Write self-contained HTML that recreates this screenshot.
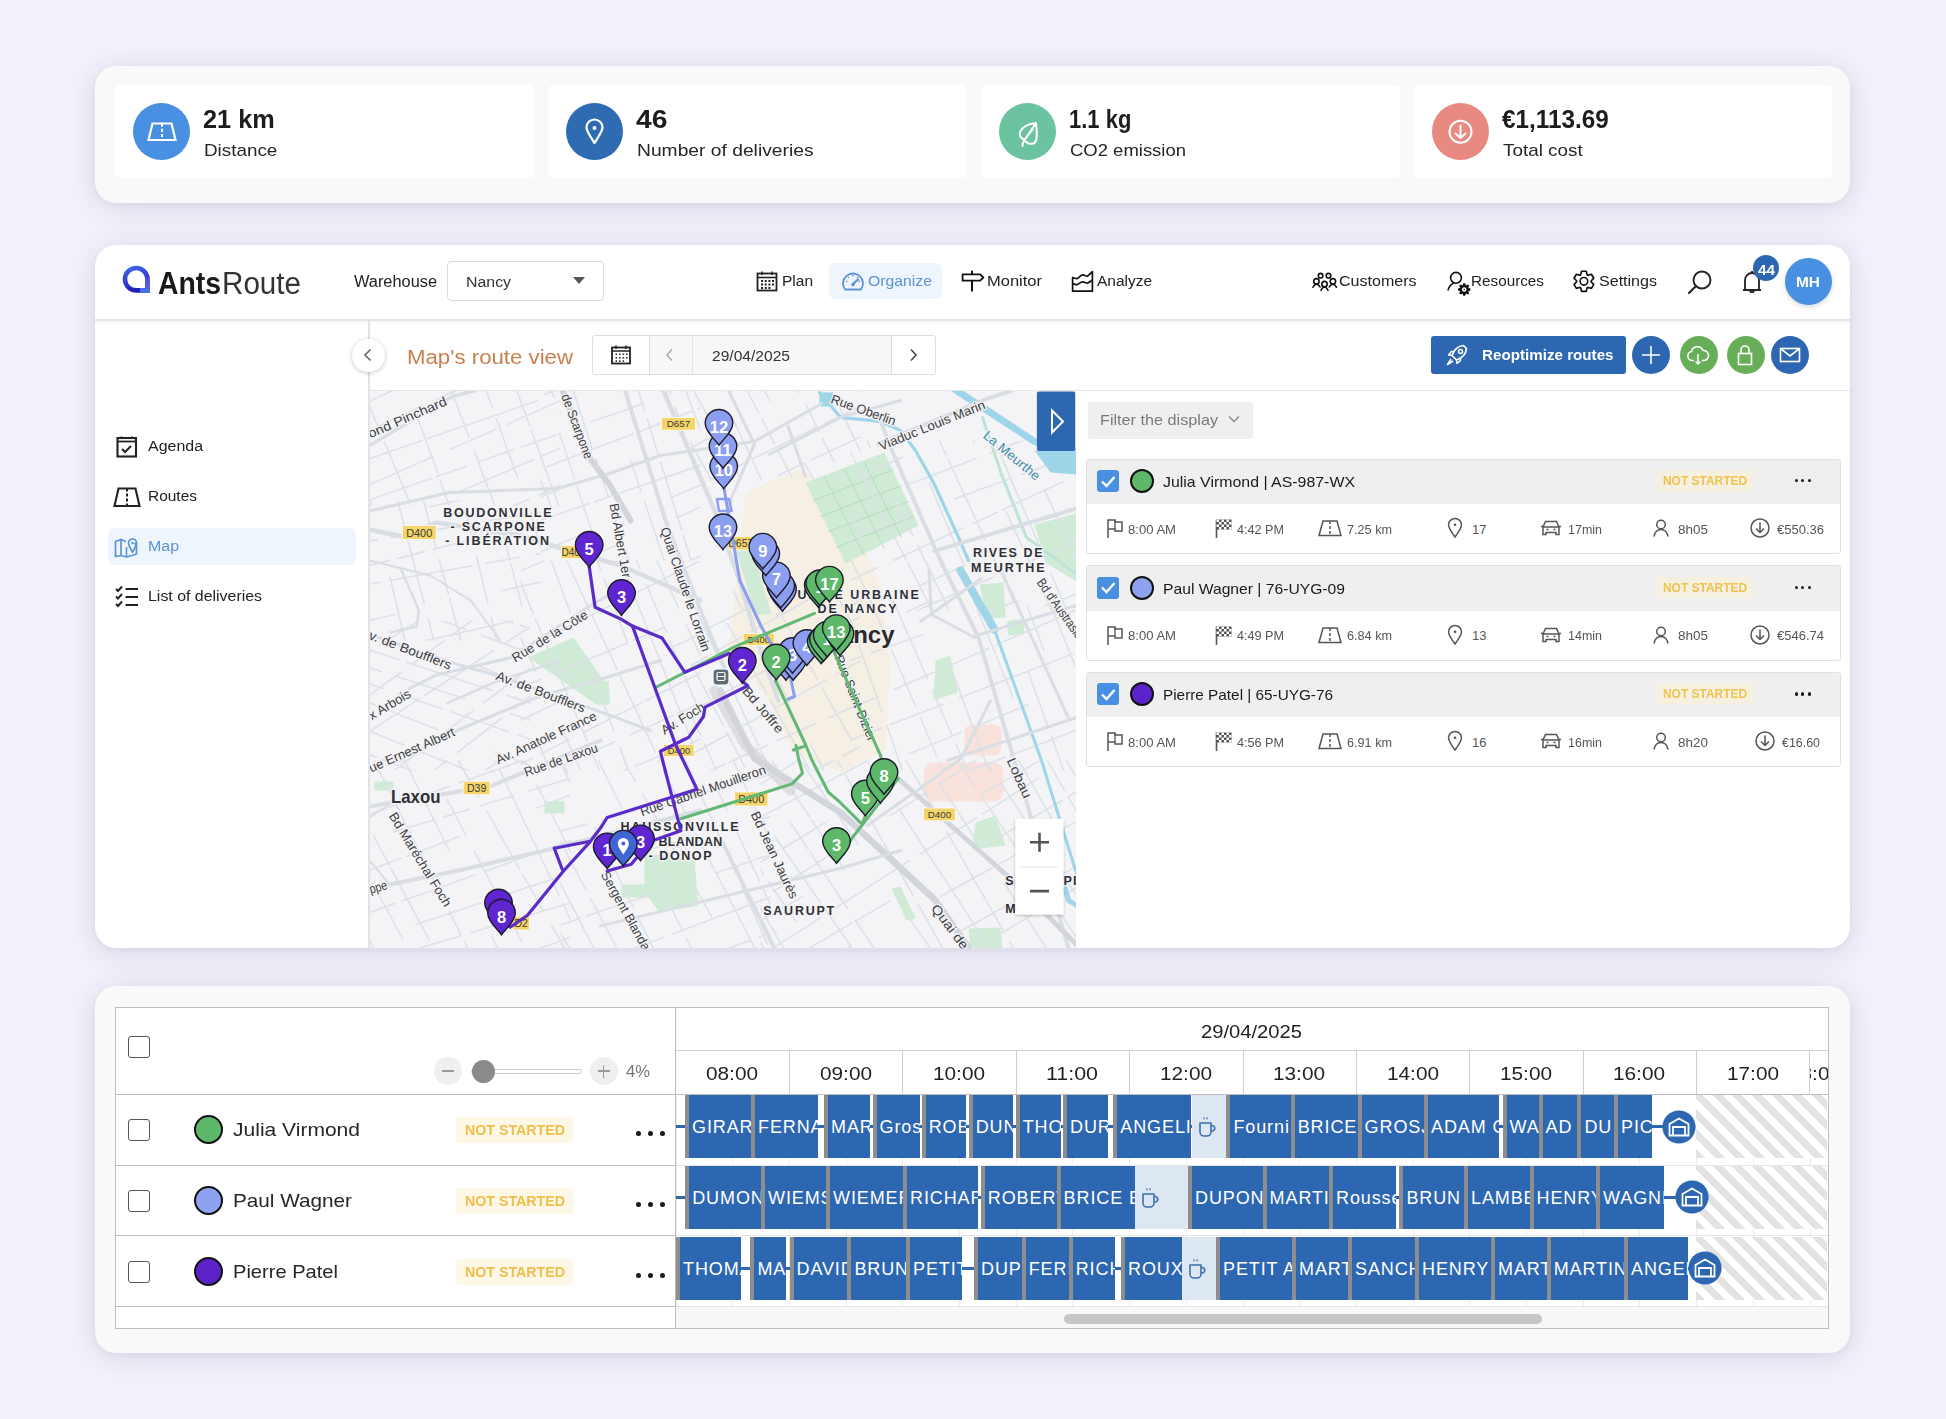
<!DOCTYPE html><html><head><meta charset="utf-8"><style>
html,body{margin:0;padding:0;}
body{width:1946px;height:1419px;overflow:hidden;background:#F3F1FA;position:relative;font-family:"Liberation Sans", sans-serif;}
.a{position:absolute;}
svg.a{overflow:visible;}
.t{position:absolute;white-space:nowrap;}
.blk{position:absolute;background:#2E67B1;box-sizing:border-box;border-left:4px solid #8E8E8E;overflow:hidden;}
.blk span{position:absolute;white-space:nowrap;color:#fff;font-size:18px;line-height:18px;letter-spacing:0.9px;}
</style></head><body>
<div class="a" style="left:95px;top:66px;width:1755px;height:137px;background:#F9F9FA;border-radius:21px;box-shadow:0 2px 6px rgba(40,30,80,0.05),0 4px 32px rgba(50,40,110,0.13);"></div>
<div class="a" style="left:115px;top:85px;width:419px;height:93px;background:#fff;border-radius:5px;"></div>
<div class="a" style="left:133px;top:103px;width:57px;height:57px;background:#4A90E2;border-radius:50%;"></div>
<div class="a" style="left:548px;top:85px;width:418px;height:93px;background:#fff;border-radius:5px;"></div>
<div class="a" style="left:566px;top:103px;width:57px;height:57px;background:#2F6BB3;border-radius:50%;"></div>
<div class="a" style="left:981px;top:85px;width:419px;height:93px;background:#fff;border-radius:5px;"></div>
<div class="a" style="left:999px;top:103px;width:57px;height:57px;background:#6CC3A0;border-radius:50%;"></div>
<div class="a" style="left:1414px;top:85px;width:418px;height:93px;background:#fff;border-radius:5px;"></div>
<div class="a" style="left:1432px;top:103px;width:57px;height:57px;background:#E88A82;border-radius:50%;"></div>
<svg class="a" style="left:133px;top:103px;" width="57" height="57" viewBox="0 0 57 57"><path d="M15.5 37 L19.5 20.5 L38.5 20.5 L42.5 37 Z" fill="none" stroke="#fff" stroke-width="2.2" stroke-linejoin="miter"/><path d="M29 20.5 V37" stroke="#fff" stroke-width="2" stroke-dasharray="3.2 2"/></svg>
<svg class="a" style="left:566px;top:103px;" width="57" height="57" viewBox="0 0 57 57"><path d="M28.5 40 C24 33 20.5 28 20.5 24.5 A8 8 0 0 1 36.5 24.5 C36.5 28 33 33 28.5 40 Z" fill="none" stroke="#fff" stroke-width="2.2" stroke-linejoin="round"/><circle cx="28.5" cy="25" r="2" fill="#fff"/></svg>
<svg class="a" style="left:999px;top:103px;" width="57" height="57" viewBox="0 0 57 57"><path d="M37 20 C29 21 23 24 21 29 C20 33 22 35.5 25.5 37 C28 34 31 29 33.5 26.5 M25.5 37 C24 39 23.5 41 23.5 43 M25.5 37 C27 40 31 41.5 34.5 40.5 C38 39 38.5 33 37 20 Z" fill="none" stroke="#fff" stroke-width="2" stroke-linecap="round" stroke-linejoin="round"/></svg>
<svg class="a" style="left:1432px;top:103px;" width="57" height="57" viewBox="0 0 57 57"><circle cx="28.5" cy="28.7" r="11" fill="none" stroke="#fff" stroke-width="2"/><path d="M28.5 22.5 V35 M23.5 30.5 L28.5 35 L33.5 30.5" fill="none" stroke="#fff" stroke-width="2" stroke-linecap="round" stroke-linejoin="round"/></svg>
<div class="t " style="left:203.0px;top:106.8px;font-size:25px;line-height:25px;color:#1d1d1d;font-weight:bold;transform:scaleX(1.0115);transform-origin:0 0;">21 km</div>
<div class="t " style="left:204.0px;top:141.6px;font-size:17px;line-height:17px;color:#262626;transform:scaleX(1.1083);transform-origin:0 0;">Distance</div>
<div class="t " style="left:636.0px;top:106.8px;font-size:25px;line-height:25px;color:#1d1d1d;font-weight:bold;transform:scaleX(1.1293);transform-origin:0 0;">46</div>
<div class="t " style="left:637.0px;top:141.6px;font-size:17px;line-height:17px;color:#262626;transform:scaleX(1.1322);transform-origin:0 0;">Number of deliveries</div>
<div class="t " style="left:1069.0px;top:106.8px;font-size:25px;line-height:25px;color:#1d1d1d;font-weight:bold;transform:scaleX(0.8791);transform-origin:0 0;">1.1 kg</div>
<div class="t " style="left:1070.0px;top:141.6px;font-size:17px;line-height:17px;color:#262626;transform:scaleX(1.0866);transform-origin:0 0;">CO2 emission</div>
<div class="t " style="left:1502.0px;top:106.8px;font-size:25px;line-height:25px;color:#1d1d1d;font-weight:bold;transform:scaleX(0.9715);transform-origin:0 0;">€1,113.69</div>
<div class="t " style="left:1503.0px;top:141.6px;font-size:17px;line-height:17px;color:#262626;transform:scaleX(1.1099);transform-origin:0 0;">Total cost</div>
<div class="a" style="left:95px;top:245px;width:1755px;height:703px;background:#fff;border-radius:21px;box-shadow:0 2px 6px rgba(40,30,80,0.05),0 4px 32px rgba(50,40,110,0.13);overflow:hidden;"></div>
<div class="a" style="left:95px;top:319px;width:1755px;height:2px;background:#E4E4E4;box-shadow:0 1px 3px rgba(0,0,0,0.08);"></div>
<svg class="a" style="left:120px;top:264px;" width="32" height="32" viewBox="0 0 32 32"><defs><linearGradient id="lg" x1="0" y1="0" x2="0.3" y2="1"><stop offset="0" stop-color="#3C66E4"/><stop offset="0.55" stop-color="#3B3FD8"/><stop offset="1" stop-color="#1E22B8"/></linearGradient><linearGradient id="lg2" x1="0" y1="0" x2="0" y2="1"><stop offset="0" stop-color="#5248E2"/><stop offset="1" stop-color="#4B6FE8"/></linearGradient></defs><path d="M27.4 15.4 V26.4 H16.2 A11.2 11.2 0 1 1 27.4 15.4 Z" fill="none" stroke="url(#lg)" stroke-width="4.6" stroke-linejoin="miter"/><path d="M27.4 13 V26.4 H20" fill="none" stroke="url(#lg2)" stroke-width="4.6"/></svg>
<div class="t " style="left:158.0px;top:267.8px;font-size:31px;line-height:31px;color:#1a1a1a;font-weight:bold;transform:scaleX(0.9146);transform-origin:0 0;">Ants</div>
<div class="t " style="left:222.0px;top:267.8px;font-size:31px;line-height:31px;color:#333;transform:scaleX(0.9551);transform-origin:0 0;">Route</div>
<div class="t " style="left:354.0px;top:273.5px;font-size:16px;line-height:16px;color:#222;transform:scaleX(1.0219);transform-origin:0 0;">Warehouse</div>
<div class="a" style="left:447px;top:261px;width:157px;height:40px;box-sizing:border-box;border:1.5px solid #DADADA;border-radius:4px;background:#fff;"></div>
<div class="t " style="left:466.0px;top:273.9px;font-size:15.5px;line-height:15.5px;color:#333;transform:scaleX(1.0243);transform-origin:0 0;">Nancy</div>
<svg class="a" style="left:572px;top:276px;" width="14" height="10" viewBox="0 0 14 10"><path d="M1 1 L13 1 L7 8 Z" fill="#555"/></svg>
<div class="a" style="left:829px;top:262.5px;width:113px;height:36.5px;background:#EEF5FD;border-radius:6px;"></div>
<svg class="a" style="left:756px;top:270px;" width="22" height="22" viewBox="0 0 22 22"><rect x="1.5" y="3.5" width="19" height="17" fill="none" stroke="#222" stroke-width="1.8"/><path d="M1.5 7.5 H20.5" stroke="#222" stroke-width="1.6"/><path d="M6 1.5 V5 M16 1.5 V5" stroke="#222" stroke-width="1.6"/><g fill="#222"><rect x="5" y="10" width="2" height="2"/><rect x="8.7" y="10" width="2" height="2"/><rect x="12.4" y="10" width="2" height="2"/><rect x="16" y="10" width="2" height="2"/><rect x="5" y="13.5" width="2" height="2"/><rect x="8.7" y="13.5" width="2" height="2"/><rect x="12.4" y="13.5" width="2" height="2"/><rect x="16" y="13.5" width="2" height="2"/><rect x="5" y="17" width="2" height="2"/><rect x="8.7" y="17" width="2" height="2"/><rect x="12.4" y="17" width="2" height="2"/></g></svg>
<div class="t " style="left:782.0px;top:273.4px;font-size:15.5px;line-height:15.5px;color:#222;transform:scaleX(0.9993);transform-origin:0 0;">Plan</div>
<svg class="a" style="left:841px;top:270px;" width="24" height="22" viewBox="0 0 24 22"><path d="M4 19.5 A10 10 0 1 1 20 19.5 Z" fill="none" stroke="#5B93D6" stroke-width="1.8" stroke-linejoin="round"/><path d="M12 14 L17 9.5" stroke="#5B93D6" stroke-width="2.2" stroke-linecap="round"/><circle cx="12" cy="14.5" r="1.8" fill="#5B93D6"/><path d="M12 5 V6.5 M7 7 L7.8 8 M17 7 L16.2 8 M5 11.5 H6.3 M19 11.5 H17.7" stroke="#5B93D6" stroke-width="1.4"/></svg>
<div class="t " style="left:868.0px;top:273.4px;font-size:15.5px;line-height:15.5px;color:#5B93D6;transform:scaleX(1.0177);transform-origin:0 0;">Organize</div>
<svg class="a" style="left:960px;top:270px;" width="24" height="24" viewBox="0 0 24 24"><path d="M2.6 4.3 H20.2 L23.3 7.5 L20.2 10.7 H2.6 Z" fill="none" stroke="#111" stroke-width="1.8" stroke-linejoin="round"/><path d="M12 1.6 V4.3 M12 11.5 V20.8" stroke="#111" stroke-width="2" stroke-linecap="round"/></svg>
<div class="t " style="left:987.0px;top:273.4px;font-size:15.5px;line-height:15.5px;color:#222;transform:scaleX(1.0642);transform-origin:0 0;">Monitor</div>
<svg class="a" style="left:1071px;top:270px;" width="24" height="24" viewBox="0 0 24 24"><path d="M1.6 21.2 V7.5 L5.7 8.8 C8 8 9.5 4.9 11.8 4.9 C13.5 4.9 15 6.5 16.6 6.1 L21.4 1.6 V21.2 Z" fill="none" stroke="#111" stroke-width="1.7" stroke-linejoin="round"/><path d="M1.6 13.6 L5.7 14.8 C8 14 9.5 11.8 11.8 11.8 C13.5 11.8 15 13.3 16.6 13.1 L21.4 10.3" fill="none" stroke="#111" stroke-width="1.7"/></svg>
<div class="t " style="left:1097.0px;top:273.4px;font-size:15.5px;line-height:15.5px;color:#222;transform:scaleX(0.9974);transform-origin:0 0;">Analyze</div>
<svg class="a" style="left:1311px;top:270px;" width="28" height="22" viewBox="0 0 28 22"><g fill="none" stroke="#111" stroke-width="1.6" stroke-linecap="round"><circle cx="9.6" cy="5.7" r="2.3"/><circle cx="17.5" cy="5.7" r="2.3"/><circle cx="5.4" cy="11.3" r="2.7"/><circle cx="13.5" cy="14.1" r="2.7"/><circle cx="21.9" cy="11.3" r="2.7"/><path d="M2 17.3 C3 15 4 14.2 5.4 14.2 C7 14.2 8 15 9 17"/><path d="M18.3 17 C19.3 15 20.4 14.2 21.9 14.2 C23.4 14.2 24.4 15 25.4 17.3"/><path d="M10 20.3 C11 18 12 17 13.5 17 C15 17 16 18 17 20.3"/></g></svg>
<div class="t " style="left:1339.0px;top:273.4px;font-size:15.5px;line-height:15.5px;color:#222;transform:scaleX(1.0343);transform-origin:0 0;">Customers</div>
<svg class="a" style="left:1446px;top:268px;" width="26" height="28" viewBox="0 0 26 28"><g fill="none" stroke="#111" stroke-width="1.6"><circle cx="10" cy="9.8" r="5.4"/><path d="M1.9 22.5 C3 18.5 5 16 7.8 15.3"/></g><path d="M17.21 15.28 L19.19 15.28 L19.85 17.53 L21.90 16.40 L23.30 17.80 L22.17 19.85 L24.42 20.51 L24.42 22.49 L22.17 23.15 L23.30 25.20 L21.90 26.60 L19.85 25.47 L19.19 27.72 L17.21 27.72 L16.55 25.47 L14.50 26.60 L13.10 25.20 L14.23 23.15 L11.98 22.49 L11.98 20.51 L14.23 19.85 L13.10 17.80 L14.50 16.40 L16.55 17.53 Z" fill="#111"/><circle cx="18.2" cy="21.5" r="2.3" fill="#fff"/><circle cx="18.2" cy="21.5" r="0.8" fill="#111"/></svg>
<div class="t " style="left:1471.0px;top:273.4px;font-size:15.5px;line-height:15.5px;color:#222;transform:scaleX(0.9854);transform-origin:0 0;">Resources</div>
<svg class="a" style="left:1572px;top:269px;" width="24" height="24" viewBox="0 0 24 24"><path d="M8.81 5.36 L9.58 2.26 L14.22 2.26 L14.99 5.36 L15.50 6.06 L16.37 6.15 L19.43 5.28 L21.75 9.29 L19.46 11.51 L19.10 12.30 L19.46 13.09 L21.75 15.31 L19.43 19.32 L16.37 18.45 L15.50 18.54 L14.99 19.24 L14.22 22.34 L9.58 22.34 L8.81 19.24 L8.30 18.54 L7.43 18.45 L4.37 19.32 L2.05 15.31 L4.34 13.09 L4.70 12.30 L4.34 11.51 L2.05 9.29 L4.37 5.28 L7.43 6.15 L8.30 6.06 Z" fill="none" stroke="#111" stroke-width="1.7" stroke-linejoin="round"/><circle cx="11.9" cy="12.3" r="3.8" fill="none" stroke="#111" stroke-width="1.6"/></svg>
<div class="t " style="left:1599.0px;top:273.4px;font-size:15.5px;line-height:15.5px;color:#222;transform:scaleX(1.0357);transform-origin:0 0;">Settings</div>
<svg class="a" style="left:1686px;top:269px;" width="28" height="28" viewBox="0 0 28 28"><circle cx="16" cy="11" r="8.5" fill="none" stroke="#222" stroke-width="1.9"/><path d="M10 17 L3 24" stroke="#222" stroke-width="2.1" stroke-linecap="round"/></svg>
<svg class="a" style="left:1740px;top:268px;" width="24" height="28" viewBox="0 0 24 28"><path d="M3 22 H21 M5 22 V12 A7 7 0 0 1 19 12 V22 M10 22 A2 2.2 0 0 0 14 22 M12 3 V5" fill="none" stroke="#222" stroke-width="1.8" stroke-linejoin="round"/></svg>
<div class="a" style="left:1753px;top:255px;width:26px;height:26px;background:#2E67B1;border-radius:50%;"></div>
<div class="t " style="left:1757.5px;top:263.1px;font-size:14px;line-height:14px;color:#fff;font-weight:bold;transform:scaleX(1.0918);transform-origin:0 0;">44</div>
<div class="a" style="left:1784.5px;top:257.5px;width:47px;height:47px;background:#4A90E2;border-radius:50%;box-shadow:0 2px 5px rgba(0,0,0,0.15);"></div>
<div class="t " style="left:1796.0px;top:273.8px;font-size:15px;line-height:15px;color:#fff;font-weight:bold;transform:scaleX(1.0288);transform-origin:0 0;">MH</div>
<div class="a" style="left:368px;top:321px;width:1.5px;height:627px;background:#E3E3E3;"></div>
<div class="a" style="left:107.5px;top:528px;width:248.5px;height:37px;background:#EEF5FD;border-radius:6px;"></div>
<svg class="a" style="left:114px;top:435px;" width="26" height="24" viewBox="0 0 26 24"><rect x="3.5" y="3" width="18.5" height="18.5" fill="none" stroke="#222" stroke-width="2.1"/><path d="M3.5 6.5 H22" stroke="#222" stroke-width="1.8"/><path d="M7.5 1.5 V4 M18 1.5 V4" stroke="#222" stroke-width="1.6"/><path d="M8 14 L11 17 L17 11" fill="none" stroke="#222" stroke-width="2"/></svg>
<div class="t " style="left:148.0px;top:437.9px;font-size:15.5px;line-height:15.5px;color:#222;transform:scaleX(1.0293);transform-origin:0 0;">Agenda</div>
<svg class="a" style="left:113px;top:486px;" width="28" height="22" viewBox="0 0 28 22"><path d="M1.5 20 L5.5 2.5 H22.5 L26.5 20 Z" fill="none" stroke="#222" stroke-width="2.1"/><path d="M14 2.5 V20" stroke="#222" stroke-width="2" stroke-dasharray="3 2"/></svg>
<div class="t " style="left:148.0px;top:487.9px;font-size:15.5px;line-height:15.5px;color:#222;transform:scaleX(0.9978);transform-origin:0 0;">Routes</div>
<svg class="a" style="left:113px;top:534px;" width="28" height="24" viewBox="0 0 28 24"><path d="M2.5 7.5 L8 5.5 V21.5 L2.5 22.5 Z M8 5.5 L13 7.5 M8 21.5 L13.5 23 L19 21.5 M19 21.5 L23.5 20 V9 L21 10" fill="none" stroke="#5B93D6" stroke-width="1.7" stroke-linejoin="round"/><path d="M19.5 18 C17 14 15.5 11.5 15.5 9 A4 4 0 0 1 23.5 9 C23.5 11.5 22 14 19.5 18 Z" fill="none" stroke="#5B93D6" stroke-width="1.7"/><circle cx="19.5" cy="9" r="1.2" fill="#5B93D6"/><path d="M13.5 13 V23" stroke="#5B93D6" stroke-width="1.6"/></svg>
<div class="t " style="left:148.0px;top:537.9px;font-size:15.5px;line-height:15.5px;color:#5B93D6;transform:scaleX(1.0282);transform-origin:0 0;">Map</div>
<svg class="a" style="left:113px;top:584px;" width="28" height="24" viewBox="0 0 28 24"><path d="M3 5 L5 7 L9 2.5 M3 12.5 L5 14.5 L9 10 M3 20 L5 22 L9 17.5" fill="none" stroke="#222" stroke-width="1.9"/><path d="M12.5 5 H25 M12.5 13 H25 M12.5 21 H25" stroke="#222" stroke-width="2"/></svg>
<div class="t " style="left:148.0px;top:587.9px;font-size:15.5px;line-height:15.5px;color:#222;transform:scaleX(1.0258);transform-origin:0 0;">List of deliveries</div>
<div class="a" style="left:352px;top:339px;width:33px;height:33px;background:#fff;border-radius:50%;box-shadow:0 1px 5px rgba(0,0,0,0.22);"></div>
<svg class="a" style="left:360px;top:347px;" width="16" height="16" viewBox="0 0 16 16"><path d="M10.5 2.5 L5 8 L10.5 13.5" fill="none" stroke="#666" stroke-width="1.6"/></svg>
<div class="t " style="left:406.5px;top:346.6px;font-size:20.5px;line-height:20.5px;color:#C9804F;transform:scaleX(1.0838);transform-origin:0 0;">Map's route view</div>
<div class="a" style="left:591.5px;top:335px;width:344px;height:39.5px;box-sizing:border-box;border:1px solid #DEDEDE;border-radius:3px;background:#fff;"></div>
<div class="a" style="left:649px;top:336px;width:242.5px;height:37.5px;background:#F7F7F7;"></div>
<div class="a" style="left:648.5px;top:336px;width:1px;height:37.5px;background:#DEDEDE;"></div>
<div class="a" style="left:692px;top:336px;width:1px;height:37.5px;background:#E4E4E4;"></div>
<div class="a" style="left:891px;top:336px;width:1px;height:37.5px;background:#DEDEDE;"></div>
<svg class="a" style="left:610px;top:344px;" width="22" height="22" viewBox="0 0 22 22"><rect x="2" y="3.5" width="18" height="16" fill="none" stroke="#222" stroke-width="1.8"/><path d="M2 7 H20" stroke="#222" stroke-width="1.5"/><path d="M6 1.5 V5 M16 1.5 V5" stroke="#222" stroke-width="1.5"/><g fill="#333"><rect x="5.5" y="9.5" width="1.6" height="1.6"/><rect x="9" y="9.5" width="1.6" height="1.6"/><rect x="12.5" y="9.5" width="1.6" height="1.6"/><rect x="16" y="9.5" width="1.6" height="1.6"/><rect x="5.5" y="13" width="1.6" height="1.6"/><rect x="9" y="13" width="1.6" height="1.6"/><rect x="12.5" y="13" width="1.6" height="1.6"/><rect x="16" y="13" width="1.6" height="1.6"/><rect x="5.5" y="16.3" width="1.6" height="1.6"/><rect x="9" y="16.3" width="1.6" height="1.6"/><rect x="12.5" y="16.3" width="1.6" height="1.6"/></g></svg>
<svg class="a" style="left:663px;top:347px;" width="14" height="16" viewBox="0 0 14 16"><path d="M9 2.5 L4 8 L9 13.5" fill="none" stroke="#AAA" stroke-width="1.5"/></svg>
<div class="t " style="left:712.0px;top:347.8px;font-size:15px;line-height:15px;color:#333;transform:scaleX(1.0391);transform-origin:0 0;">29/04/2025</div>
<svg class="a" style="left:906px;top:347px;" width="14" height="16" viewBox="0 0 14 16"><path d="M5 2.5 L10 8 L5 13.5" fill="none" stroke="#444" stroke-width="1.5"/></svg>
<div class="a" style="left:1431px;top:336px;width:195px;height:37.5px;background:#2E67B1;border-radius:3px;"></div>
<svg class="a" style="left:1444px;top:342px;" width="26" height="26" viewBox="0 0 26 26"><path d="M19.5 3.5 C14 4 10 8 8 13.5 L12.5 18 C18 16 22 12 22.5 6.5 Z" fill="none" stroke="#fff" stroke-width="1.7" stroke-linejoin="round"/><circle cx="16.5" cy="9.5" r="2" fill="none" stroke="#fff" stroke-width="1.5"/><path d="M8 13.5 L4.5 13 L7.5 9.5 L10.5 9.5 M12.5 18 L13 21.5 L16.5 18.5 L16.5 15.5 M7 17 L3.5 22.5 L9 19" fill="none" stroke="#fff" stroke-width="1.5" stroke-linejoin="round"/></svg>
<div class="t " style="left:1481.5px;top:347.4px;font-size:15.5px;line-height:15.5px;color:#fff;font-weight:bold;transform:scaleX(0.9788);transform-origin:0 0;">Reoptimize routes</div>
<div class="a" style="left:1632.1px;top:335.6px;width:38.4px;height:38.4px;background:#2E67B1;border-radius:50%;"></div>
<svg class="a" style="left:1639px;top:343px;" width="24" height="24" viewBox="0 0 24 24"><path d="M12 3 V21 M3 12 H21" stroke="#fff" stroke-width="1.6"/></svg>
<div class="a" style="left:1679.6px;top:335.6px;width:38.4px;height:38.4px;background:#68AE58;border-radius:50%;"></div>
<svg class="a" style="left:1686px;top:343px;" width="24" height="24" viewBox="0 0 24 24"><path d="M8 17.5 H6 A4.5 4.5 0 0 1 5.5 8.6 A6 6 0 0 1 17 7.5 A5 5 0 0 1 18 17.5 H16" fill="none" stroke="#fff" stroke-width="1.5" stroke-linejoin="round"/><path d="M12 11 V21 M9.5 18.5 L12 21 L14.5 18.5" fill="none" stroke="#fff" stroke-width="1.5"/></svg>
<div class="a" style="left:1726.6px;top:335.6px;width:38.4px;height:38.4px;background:#68AE58;border-radius:50%;"></div>
<svg class="a" style="left:1733px;top:343px;" width="24" height="24" viewBox="0 0 24 24"><rect x="5.5" y="10.5" width="13" height="11" fill="none" stroke="#fff" stroke-width="1.6"/><path d="M8 10.5 V7 A4 4 0 0 1 16 7 V10.5" fill="none" stroke="#fff" stroke-width="1.6"/></svg>
<div class="a" style="left:1770.8px;top:335.6px;width:38.4px;height:38.4px;background:#2E67B1;border-radius:50%;"></div>
<svg class="a" style="left:1778px;top:343px;" width="24" height="24" viewBox="0 0 24 24"><rect x="2.5" y="5.5" width="19" height="13" fill="none" stroke="#fff" stroke-width="1.6"/><path d="M2.5 5.5 L12 13 L21.5 5.5" fill="none" stroke="#fff" stroke-width="1.6"/></svg>
<div class="a" style="left:369.5px;top:390px;width:1480.5px;height:1px;background:#E6E6E6;"></div>
<div class="a" style="left:1088px;top:401.5px;width:164.5px;height:37px;background:#EFEFEF;border-radius:3px;"></div>
<div class="t " style="left:1099.5px;top:412.3px;font-size:15px;line-height:15px;color:#7A7A7A;transform:scaleX(1.0805);transform-origin:0 0;">Filter the display</div>
<svg class="a" style="left:1227px;top:413px;" width="14" height="12" viewBox="0 0 14 12"><path d="M2 3.5 L7 8.5 L12 3.5" fill="none" stroke="#888" stroke-width="1.4"/></svg>
<div class="a" style="left:1086px;top:458.5px;width:754.5px;height:95.5px;box-sizing:border-box;border:1px solid #E0E0E0;border-radius:3px;background:#fff;"></div>
<div class="a" style="left:1087px;top:459.5px;width:752.5px;height:44.5px;background:#EFEFEF;border-radius:2px 2px 0 0;"></div>
<div class="a" style="left:1097px;top:470.0px;width:22px;height:22px;background:#4A90E2;border-radius:3px;"></div>
<svg class="a" style="left:1097px;top:470px;" width="22" height="22" viewBox="0 0 22 22"><path d="M5 11.5 L9.5 16 L17.5 7" fill="none" stroke="#fff" stroke-width="2.4"/></svg>
<div class="a" style="left:1129.5px;top:469.0px;width:24px;height:24px;box-sizing:border-box;background:#5DB86A;border:2px solid #111;border-radius:50%;"></div>
<div class="t " style="left:1163.0px;top:473.8px;font-size:15px;line-height:15px;color:#1a1a1a;transform:scaleX(1.0597);transform-origin:0 0;">Julia Virmond | AS-987-WX</div>
<div class="a" style="left:1656px;top:470.0px;width:98px;height:21px;background:#F5F0E0;border-radius:3px;"></div>
<div class="t " style="left:1663.0px;top:475.3px;font-size:12px;line-height:12px;color:#F0C24E;font-weight:bold;transform:scaleX(0.9948);transform-origin:0 0;">NOT STARTED</div>
<div class="a" style="left:1794.5px;top:479.3px;width:3.2px;height:3.2px;background:#1a1a1a;border-radius:50%;"></div>
<div class="a" style="left:1801.3px;top:479.3px;width:3.2px;height:3.2px;background:#1a1a1a;border-radius:50%;"></div>
<div class="a" style="left:1808.1px;top:479.3px;width:3.2px;height:3.2px;background:#1a1a1a;border-radius:50%;"></div>
<svg class="a" style="left:1105px;top:517px;" width="20" height="22" viewBox="0 0 20 22"><path d="M3 21 V3 H10 V5 H17 V14 H10 V12 H3" fill="none" stroke="#555" stroke-width="1.5"/><path d="M10 3 V12" stroke="#555" stroke-width="1.3"/></svg>
<div class="t " style="left:1128.0px;top:522.5px;font-size:13px;line-height:13px;color:#555;transform:scaleX(1.0064);transform-origin:0 0;">8:00 AM</div>
<svg class="a" style="left:1214px;top:517px;" width="20" height="22" viewBox="0 0 20 22"><path d="M2.5 21 V2.5" stroke="#555" stroke-width="1.6"/><rect x="2.5" y="2.5" width="15" height="10" fill="#555"/><g fill="#fff"><rect x="2.5" y="2.5" width="2.5" height="2.5"/><rect x="7.5" y="2.5" width="2.5" height="2.5"/><rect x="12.5" y="2.5" width="2.5" height="2.5"/><rect x="5" y="5" width="2.5" height="2.5"/><rect x="10" y="5" width="2.5" height="2.5"/><rect x="15" y="5" width="2.5" height="2.5"/><rect x="2.5" y="7.5" width="2.5" height="2.5"/><rect x="7.5" y="7.5" width="2.5" height="2.5"/><rect x="12.5" y="7.5" width="2.5" height="2.5"/><rect x="5" y="10" width="2.5" height="2.5"/><rect x="10" y="10" width="2.5" height="2.5"/><rect x="15" y="10" width="2.5" height="2.5"/></g></svg>
<div class="t " style="left:1236.5px;top:522.5px;font-size:13px;line-height:13px;color:#555;transform:scaleX(0.9709);transform-origin:0 0;">4:42 PM</div>
<svg class="a" style="left:1317px;top:518px;" width="26" height="20" viewBox="0 0 26 20"><path d="M2 17.5 L6 3 H20 L24 17.5 Z" fill="none" stroke="#555" stroke-width="1.5"/><path d="M13 3 V17.5" stroke="#555" stroke-width="1.5" stroke-dasharray="3 2"/></svg>
<div class="t " style="left:1347.0px;top:522.5px;font-size:13px;line-height:13px;color:#555;transform:scaleX(0.9732);transform-origin:0 0;">7.25 km</div>
<svg class="a" style="left:1446px;top:517px;" width="18" height="22" viewBox="0 0 18 22"><path d="M9 20 C5 14.5 2.5 11 2.5 8 A6.5 6.5 0 0 1 15.5 8 C15.5 11 13 14.5 9 20 Z" fill="none" stroke="#555" stroke-width="1.5"/><circle cx="9" cy="7.8" r="1.3" fill="#555"/></svg>
<div class="t " style="left:1472.0px;top:522.5px;font-size:13px;line-height:13px;color:#555;">17</div>
<svg class="a" style="left:1540px;top:518px;" width="22" height="20" viewBox="0 0 22 20"><path d="M3 16.5 V9 L5.5 3.5 H16.5 L19 9 V16.5 H16 V14.5 H6 V16.5 Z M3 9 H19 M1 8.5 H3 M19 8.5 H21" fill="none" stroke="#555" stroke-width="1.5"/><path d="M6.5 11.5 H8.5 M13.5 11.5 H15.5" stroke="#555" stroke-width="1.5"/></svg>
<div class="t " style="left:1568.0px;top:522.5px;font-size:13px;line-height:13px;color:#555;transform:scaleX(0.9603);transform-origin:0 0;">17min</div>
<svg class="a" style="left:1652px;top:518px;" width="18" height="20" viewBox="0 0 18 20"><circle cx="9" cy="6.5" r="4.3" fill="none" stroke="#555" stroke-width="1.5"/><path d="M2 18.5 C3 13 5.5 11.5 9 11.5 C12.5 11.5 15 13 16 18.5" fill="none" stroke="#555" stroke-width="1.5"/></svg>
<div class="t " style="left:1677.7px;top:522.5px;font-size:13px;line-height:13px;color:#555;transform:scaleX(1.0375);transform-origin:0 0;">8h05</div>
<svg class="a" style="left:1749px;top:517px;" width="22" height="22" viewBox="0 0 22 22"><circle cx="11" cy="11" r="9" fill="none" stroke="#555" stroke-width="1.5"/><path d="M11 5.5 V15.5 M7 11.5 L11 15.5 L15 11.5" fill="none" stroke="#555" stroke-width="1.5"/></svg>
<div class="t " style="left:1777.0px;top:522.5px;font-size:13px;line-height:13px;color:#555;transform:scaleX(1.0003);transform-origin:0 0;">€550.36</div>
<div class="a" style="left:1086px;top:565.2px;width:754.5px;height:95.5px;box-sizing:border-box;border:1px solid #E0E0E0;border-radius:3px;background:#fff;"></div>
<div class="a" style="left:1087px;top:566.2px;width:752.5px;height:44.5px;background:#EFEFEF;border-radius:2px 2px 0 0;"></div>
<div class="a" style="left:1097px;top:576.7px;width:22px;height:22px;background:#4A90E2;border-radius:3px;"></div>
<svg class="a" style="left:1097px;top:576px;" width="22" height="22" viewBox="0 0 22 22"><path d="M5 11.5 L9.5 16 L17.5 7" fill="none" stroke="#fff" stroke-width="2.4"/></svg>
<div class="a" style="left:1129.5px;top:575.7px;width:24px;height:24px;box-sizing:border-box;background:#8EA2F2;border:2px solid #111;border-radius:50%;"></div>
<div class="t " style="left:1163.0px;top:580.5px;font-size:15px;line-height:15px;color:#1a1a1a;transform:scaleX(1.0445);transform-origin:0 0;">Paul Wagner | 76-UYG-09</div>
<div class="a" style="left:1656px;top:576.7px;width:98px;height:21px;background:#F5F0E0;border-radius:3px;"></div>
<div class="t " style="left:1663.0px;top:582.0px;font-size:12px;line-height:12px;color:#F0C24E;font-weight:bold;transform:scaleX(0.9948);transform-origin:0 0;">NOT STARTED</div>
<div class="a" style="left:1794.5px;top:586.0px;width:3.2px;height:3.2px;background:#1a1a1a;border-radius:50%;"></div>
<div class="a" style="left:1801.3px;top:586.0px;width:3.2px;height:3.2px;background:#1a1a1a;border-radius:50%;"></div>
<div class="a" style="left:1808.1px;top:586.0px;width:3.2px;height:3.2px;background:#1a1a1a;border-radius:50%;"></div>
<svg class="a" style="left:1105px;top:624px;" width="20" height="22" viewBox="0 0 20 22"><path d="M3 21 V3 H10 V5 H17 V14 H10 V12 H3" fill="none" stroke="#555" stroke-width="1.5"/><path d="M10 3 V12" stroke="#555" stroke-width="1.3"/></svg>
<div class="t " style="left:1128.0px;top:629.2px;font-size:13px;line-height:13px;color:#555;transform:scaleX(1.0064);transform-origin:0 0;">8:00 AM</div>
<svg class="a" style="left:1214px;top:624px;" width="20" height="22" viewBox="0 0 20 22"><path d="M2.5 21 V2.5" stroke="#555" stroke-width="1.6"/><rect x="2.5" y="2.5" width="15" height="10" fill="#555"/><g fill="#fff"><rect x="2.5" y="2.5" width="2.5" height="2.5"/><rect x="7.5" y="2.5" width="2.5" height="2.5"/><rect x="12.5" y="2.5" width="2.5" height="2.5"/><rect x="5" y="5" width="2.5" height="2.5"/><rect x="10" y="5" width="2.5" height="2.5"/><rect x="15" y="5" width="2.5" height="2.5"/><rect x="2.5" y="7.5" width="2.5" height="2.5"/><rect x="7.5" y="7.5" width="2.5" height="2.5"/><rect x="12.5" y="7.5" width="2.5" height="2.5"/><rect x="5" y="10" width="2.5" height="2.5"/><rect x="10" y="10" width="2.5" height="2.5"/><rect x="15" y="10" width="2.5" height="2.5"/></g></svg>
<div class="t " style="left:1236.5px;top:629.2px;font-size:13px;line-height:13px;color:#555;transform:scaleX(0.9709);transform-origin:0 0;">4:49 PM</div>
<svg class="a" style="left:1317px;top:625px;" width="26" height="20" viewBox="0 0 26 20"><path d="M2 17.5 L6 3 H20 L24 17.5 Z" fill="none" stroke="#555" stroke-width="1.5"/><path d="M13 3 V17.5" stroke="#555" stroke-width="1.5" stroke-dasharray="3 2"/></svg>
<div class="t " style="left:1347.0px;top:629.2px;font-size:13px;line-height:13px;color:#555;transform:scaleX(0.9732);transform-origin:0 0;">6.84 km</div>
<svg class="a" style="left:1446px;top:624px;" width="18" height="22" viewBox="0 0 18 22"><path d="M9 20 C5 14.5 2.5 11 2.5 8 A6.5 6.5 0 0 1 15.5 8 C15.5 11 13 14.5 9 20 Z" fill="none" stroke="#555" stroke-width="1.5"/><circle cx="9" cy="7.8" r="1.3" fill="#555"/></svg>
<div class="t " style="left:1472.0px;top:629.2px;font-size:13px;line-height:13px;color:#555;">13</div>
<svg class="a" style="left:1540px;top:625px;" width="22" height="20" viewBox="0 0 22 20"><path d="M3 16.5 V9 L5.5 3.5 H16.5 L19 9 V16.5 H16 V14.5 H6 V16.5 Z M3 9 H19 M1 8.5 H3 M19 8.5 H21" fill="none" stroke="#555" stroke-width="1.5"/><path d="M6.5 11.5 H8.5 M13.5 11.5 H15.5" stroke="#555" stroke-width="1.5"/></svg>
<div class="t " style="left:1568.0px;top:629.2px;font-size:13px;line-height:13px;color:#555;transform:scaleX(0.9603);transform-origin:0 0;">14min</div>
<svg class="a" style="left:1652px;top:625px;" width="18" height="20" viewBox="0 0 18 20"><circle cx="9" cy="6.5" r="4.3" fill="none" stroke="#555" stroke-width="1.5"/><path d="M2 18.5 C3 13 5.5 11.5 9 11.5 C12.5 11.5 15 13 16 18.5" fill="none" stroke="#555" stroke-width="1.5"/></svg>
<div class="t " style="left:1677.7px;top:629.2px;font-size:13px;line-height:13px;color:#555;transform:scaleX(1.0375);transform-origin:0 0;">8h05</div>
<svg class="a" style="left:1749px;top:624px;" width="22" height="22" viewBox="0 0 22 22"><circle cx="11" cy="11" r="9" fill="none" stroke="#555" stroke-width="1.5"/><path d="M11 5.5 V15.5 M7 11.5 L11 15.5 L15 11.5" fill="none" stroke="#555" stroke-width="1.5"/></svg>
<div class="t " style="left:1777.0px;top:629.2px;font-size:13px;line-height:13px;color:#555;transform:scaleX(1.0003);transform-origin:0 0;">€546.74</div>
<div class="a" style="left:1086px;top:671.6px;width:754.5px;height:95.5px;box-sizing:border-box;border:1px solid #E0E0E0;border-radius:3px;background:#fff;"></div>
<div class="a" style="left:1087px;top:672.6px;width:752.5px;height:44.5px;background:#EFEFEF;border-radius:2px 2px 0 0;"></div>
<div class="a" style="left:1097px;top:683.1px;width:22px;height:22px;background:#4A90E2;border-radius:3px;"></div>
<svg class="a" style="left:1097px;top:683px;" width="22" height="22" viewBox="0 0 22 22"><path d="M5 11.5 L9.5 16 L17.5 7" fill="none" stroke="#fff" stroke-width="2.4"/></svg>
<div class="a" style="left:1129.5px;top:682.1px;width:24px;height:24px;box-sizing:border-box;background:#5B22C9;border:2px solid #111;border-radius:50%;"></div>
<div class="t " style="left:1163.0px;top:686.9px;font-size:15px;line-height:15px;color:#1a1a1a;transform:scaleX(1.0213);transform-origin:0 0;">Pierre Patel | 65-UYG-76</div>
<div class="a" style="left:1656px;top:683.1px;width:98px;height:21px;background:#F5F0E0;border-radius:3px;"></div>
<div class="t " style="left:1663.0px;top:688.4px;font-size:12px;line-height:12px;color:#F0C24E;font-weight:bold;transform:scaleX(0.9948);transform-origin:0 0;">NOT STARTED</div>
<div class="a" style="left:1794.5px;top:692.4px;width:3.2px;height:3.2px;background:#1a1a1a;border-radius:50%;"></div>
<div class="a" style="left:1801.3px;top:692.4px;width:3.2px;height:3.2px;background:#1a1a1a;border-radius:50%;"></div>
<div class="a" style="left:1808.1px;top:692.4px;width:3.2px;height:3.2px;background:#1a1a1a;border-radius:50%;"></div>
<svg class="a" style="left:1105px;top:730px;" width="20" height="22" viewBox="0 0 20 22"><path d="M3 21 V3 H10 V5 H17 V14 H10 V12 H3" fill="none" stroke="#555" stroke-width="1.5"/><path d="M10 3 V12" stroke="#555" stroke-width="1.3"/></svg>
<div class="t " style="left:1128.0px;top:735.6px;font-size:13px;line-height:13px;color:#555;transform:scaleX(1.0064);transform-origin:0 0;">8:00 AM</div>
<svg class="a" style="left:1214px;top:730px;" width="20" height="22" viewBox="0 0 20 22"><path d="M2.5 21 V2.5" stroke="#555" stroke-width="1.6"/><rect x="2.5" y="2.5" width="15" height="10" fill="#555"/><g fill="#fff"><rect x="2.5" y="2.5" width="2.5" height="2.5"/><rect x="7.5" y="2.5" width="2.5" height="2.5"/><rect x="12.5" y="2.5" width="2.5" height="2.5"/><rect x="5" y="5" width="2.5" height="2.5"/><rect x="10" y="5" width="2.5" height="2.5"/><rect x="15" y="5" width="2.5" height="2.5"/><rect x="2.5" y="7.5" width="2.5" height="2.5"/><rect x="7.5" y="7.5" width="2.5" height="2.5"/><rect x="12.5" y="7.5" width="2.5" height="2.5"/><rect x="5" y="10" width="2.5" height="2.5"/><rect x="10" y="10" width="2.5" height="2.5"/><rect x="15" y="10" width="2.5" height="2.5"/></g></svg>
<div class="t " style="left:1236.5px;top:735.6px;font-size:13px;line-height:13px;color:#555;transform:scaleX(0.9709);transform-origin:0 0;">4:56 PM</div>
<svg class="a" style="left:1317px;top:731px;" width="26" height="20" viewBox="0 0 26 20"><path d="M2 17.5 L6 3 H20 L24 17.5 Z" fill="none" stroke="#555" stroke-width="1.5"/><path d="M13 3 V17.5" stroke="#555" stroke-width="1.5" stroke-dasharray="3 2"/></svg>
<div class="t " style="left:1347.0px;top:735.6px;font-size:13px;line-height:13px;color:#555;transform:scaleX(0.9732);transform-origin:0 0;">6.91 km</div>
<svg class="a" style="left:1446px;top:730px;" width="18" height="22" viewBox="0 0 18 22"><path d="M9 20 C5 14.5 2.5 11 2.5 8 A6.5 6.5 0 0 1 15.5 8 C15.5 11 13 14.5 9 20 Z" fill="none" stroke="#555" stroke-width="1.5"/><circle cx="9" cy="7.8" r="1.3" fill="#555"/></svg>
<div class="t " style="left:1472.0px;top:735.6px;font-size:13px;line-height:13px;color:#555;">16</div>
<svg class="a" style="left:1540px;top:731px;" width="22" height="20" viewBox="0 0 22 20"><path d="M3 16.5 V9 L5.5 3.5 H16.5 L19 9 V16.5 H16 V14.5 H6 V16.5 Z M3 9 H19 M1 8.5 H3 M19 8.5 H21" fill="none" stroke="#555" stroke-width="1.5"/><path d="M6.5 11.5 H8.5 M13.5 11.5 H15.5" stroke="#555" stroke-width="1.5"/></svg>
<div class="t " style="left:1568.0px;top:735.6px;font-size:13px;line-height:13px;color:#555;transform:scaleX(0.9603);transform-origin:0 0;">16min</div>
<svg class="a" style="left:1652px;top:731px;" width="18" height="20" viewBox="0 0 18 20"><circle cx="9" cy="6.5" r="4.3" fill="none" stroke="#555" stroke-width="1.5"/><path d="M2 18.5 C3 13 5.5 11.5 9 11.5 C12.5 11.5 15 13 16 18.5" fill="none" stroke="#555" stroke-width="1.5"/></svg>
<div class="t " style="left:1677.7px;top:735.6px;font-size:13px;line-height:13px;color:#555;transform:scaleX(1.0375);transform-origin:0 0;">8h20</div>
<svg class="a" style="left:1753.5px;top:730px;" width="22" height="22" viewBox="0 0 22 22"><circle cx="11" cy="11" r="9" fill="none" stroke="#555" stroke-width="1.5"/><path d="M11 5.5 V15.5 M7 11.5 L11 15.5 L15 11.5" fill="none" stroke="#555" stroke-width="1.5"/></svg>
<div class="t " style="left:1781.5px;top:735.6px;font-size:13px;line-height:13px;color:#555;transform:scaleX(0.9558);transform-origin:0 0;">€16.60</div>
<svg class="a" style="left:369.5px;top:390.5px;border-bottom-right-radius:0" width="706" height="557.5" viewBox="369.5 390.5 706 557.5"><defs><filter id="sh" x="-20%" y="-20%" width="140%" height="140%"><feDropShadow dx="0" dy="1" stdDeviation="1.5" flood-opacity="0.25"/></filter><clipPath id="mc"><rect x="369.5" y="390.5" width="706" height="557.5"/></clipPath></defs><g clip-path="url(#mc)"><rect x="369.5" y="390.5" width="706" height="557.5" fill="#F4F3F5"/><path d="M745.0 492.0 L800.0 468.0 L842.0 500.0 L880.0 585.0 L890.0 660.0 L885.0 750.0 L840.0 772.0 L792.0 752.0 L768.0 700.0 L728.0 648.0 L738.0 562.0 Z" fill="#F6EFE3" /><rect x="923" y="762" width="80" height="39" rx="10" fill="#F9E1DC"/><rect x="964" y="724" width="37" height="31" rx="8" fill="#F9E1DC"/><path d="M805.0 482.0 L884.0 452.0 L918.0 525.0 L845.0 563.0 Z" fill="#CFEBD5" /><path d="M528.0 657.0 L573.0 637.0 L609.0 688.0 L609.0 704.0 L596.0 704.0 Z" fill="#CFEBD5" /><path d="M644.0 852.0 L694.0 860.0 L698.0 905.0 L659.0 912.0 L648.0 897.0 L621.0 897.0 L621.0 884.0 L644.0 884.0 Z" fill="#CFEBD5" /><path d="M935.0 660.0 L950.0 655.0 L957.0 692.0 L933.0 700.0 Z" fill="#CFEBD5" /><path d="M979.0 584.0 L1003.0 582.0 L1005.0 617.0 L987.0 618.0 Z" fill="#CFEBD5" /><path d="M1034.0 524.0 L1076.0 513.0 L1076.0 581.0 L1045.0 562.0 Z" fill="#CFEBD5" /><path d="M975.0 822.0 L995.0 815.0 L1005.0 845.0 L972.0 849.0 Z" fill="#CFEBD5" /><path d="M968.0 928.0 L1000.0 927.0 L1002.0 948.0 L970.0 948.0 Z" fill="#CFEBD5" /><path d="M735.0 548.0 L752.0 548.0 L771.0 614.0 L755.0 614.0 Z" fill="#CFEBD5" /><path d="M891.0 888.0 L900.0 886.0 L915.0 918.0 L906.0 920.0 Z" fill="#CFEBD5" /><path d="M374.0 781.0 L393.0 781.0 L393.0 790.0 L374.0 790.0 Z" fill="#CFEBD5" /><path d="M544.0 801.0 L564.0 801.0 L564.0 813.0 L544.0 813.0 Z" fill="#CFEBD5" /><path d="M1006.0 621.0 L1023.0 618.0 L1024.0 633.0 L1008.0 635.0 Z" fill="#CFEBD5" /><path d="M600.0 681.0 L608.0 680.0 L609.0 704.0 L600.0 704.0 Z" fill="#CFEBD5" /><g stroke="#B2D9BB" stroke-width="0.9" fill="none"><path d="M824 476 L864 555 M844 469 L884 548 M864 462 L901 537 M813 500 L893 469 M820 516 L901 485 M828 531 L908 501 M836 547 L913 516"/></g><clipPath id="rc0"><rect x="369" y="390" width="191" height="115"/></clipPath><path clip-path="url(#rc0)" d="M317.2 393.8 L396.3 362.4 M404.8 359.0 L463.5 335.7 M327.6 419.4 L398.3 387.3 M490.6 345.3 L549.7 318.4 M337.6 444.0 L371.6 428.4 M372.1 428.2 L422.2 405.2 M436.0 398.9 L489.4 374.4 M497.5 370.6 L559.4 342.3 M346.5 465.9 L421.8 440.0 M427.1 438.1 L464.9 425.1 M466.1 424.7 L536.8 400.3 M356.1 489.9 L433.1 456.0 M449.3 448.9 L495.8 428.4 M506.2 423.9 L575.4 393.4 M361.1 502.2 L431.2 477.7 M435.4 476.3 L465.2 465.9 M478.8 461.1 L513.3 449.1 M520.9 446.5 L556.2 434.2 M558.4 433.4 L621.6 411.4 M457.7 491.7 L533.4 458.9 M539.9 456.1 L613.8 424.1 M385.1 561.8 L423.4 545.0 M428.8 542.6 L469.3 524.8 M470.8 524.1 L528.4 498.8 M538.3 494.5 L583.3 474.7 M392.9 581.2 L468.5 551.3 M553.5 517.8 L588.2 504.1 M524.3 332.1 L553.5 396.6 M559.6 410.1 L585.9 468.2 M587.2 471.1 L616.9 536.5 M488.3 312.3 L510.4 373.4 M516.0 388.9 L529.0 424.9 M530.7 429.5 L549.1 480.2 M550.1 483.2 L566.8 529.2 M461.9 323.0 L491.7 406.6 M495.9 418.3 L517.1 477.6 M530.3 514.8 L559.8 597.2 M447.1 379.7 L468.4 436.4 M474.1 451.5 L499.7 519.8 M504.8 533.1 L534.5 612.2 M416.2 414.4 L437.2 473.0 M439.6 479.5 L460.8 538.6 M352.8 367.0 L380.9 434.2 M383.9 441.5 L414.6 514.8 M419.8 527.3 L430.1 552.1 M433.5 560.1 L448.9 597.0 M326.4 377.8 L340.3 417.0 M342.1 422.2 L365.1 487.3 M366.1 490.2 L394.1 569.2 M396.8 576.7 L424.4 654.9" fill="none" stroke="#DDE1E8" stroke-width="1.6" stroke-linecap="round"/><clipPath id="rc1"><rect x="540" y="390" width="160" height="170"/></clipPath><path clip-path="url(#rc1)" d="M714.0 408.5 L733.6 468.2 M663.0 329.8 L677.9 370.0 M680.5 377.0 L703.2 438.6 M735.6 526.2 L746.0 554.2 M650.1 334.5 L670.1 393.3 M674.7 406.8 L683.1 431.7 M695.7 468.7 L706.6 501.0 M710.3 511.7 L727.6 562.9 M623.6 344.3 L644.2 410.7 M646.8 418.8 L657.6 453.8 M660.1 461.9 L681.3 530.1 M682.8 534.8 L696.8 580.1 M630.0 459.5 L640.6 491.2 M644.2 501.9 L670.8 581.7 M564.7 365.7 L591.7 447.7 M595.3 458.8 L607.3 495.2 M611.9 509.2 L632.8 572.6 M559.0 432.8 L573.9 478.1 M576.4 485.6 L595.5 543.3 M607.0 578.3 L631.1 651.4 M502.8 388.2 L515.9 420.3 M520.8 432.4 L550.8 506.1 M579.4 576.1 L594.2 612.6 M503.3 461.4 L518.2 504.2 M523.1 518.6 L550.6 597.5 M555.6 611.9 L584.5 695.0 M468.3 424.6 L528.0 400.5 M544.2 394.0 L598.5 372.1 M611.8 366.7 L669.0 343.6 M680.5 339.0 L707.6 328.0 M482.6 459.6 L522.7 445.5 M590.3 421.6 L643.1 402.9 M710.0 379.3 L781.3 354.1 M493.3 486.4 L536.3 470.0 M546.7 466.0 L576.4 454.7 M578.5 453.9 L632.8 433.2 M636.2 431.9 L691.7 410.7 M698.0 408.3 L746.5 389.8 M503.1 510.5 L565.0 486.4 M726.9 423.6 L769.4 407.1 M511.0 529.8 L589.2 502.9 M593.3 501.5 L661.6 477.9 M663.2 477.4 L738.0 451.6 M522.5 558.6 L586.7 531.9 M670.2 497.2 L700.2 484.7 M712.8 479.4 L766.0 457.3 M532.3 582.5 L557.3 571.2 M565.7 567.4 L622.1 541.8 M676.3 517.3 L753.9 482.1 M546.6 618.3 L615.8 590.0 M623.5 586.8 L677.7 564.7 M687.7 560.6 L711.6 550.8 M725.7 545.1 L759.7 531.2" fill="none" stroke="#DDE1E8" stroke-width="1.6" stroke-linecap="round"/><clipPath id="rc2"><rect x="690" y="390" width="170" height="90"/></clipPath><path clip-path="url(#rc2)" d="M809.1 302.4 L838.2 352.9 M846.3 366.8 L884.9 433.6 M892.6 447.0 L925.6 504.0 M794.0 310.4 L826.8 380.4 M833.8 395.3 L864.9 461.8 M766.1 325.2 L799.3 392.1 M805.1 403.8 L818.2 430.3 M822.0 437.9 L833.4 460.9 M838.5 471.2 L867.7 529.9 M736.6 340.8 L769.5 400.2 M804.1 462.7 L838.3 524.5 M724.5 347.2 L758.0 412.1 M761.4 418.6 L774.3 443.7 M777.4 449.7 L791.8 477.6 M799.3 492.1 L827.2 546.1 M733.1 419.6 L760.1 477.4 M760.4 478.2 L796.6 555.6 M682.5 369.6 L712.9 426.7 M720.9 441.7 L745.5 487.9 M750.6 497.4 L773.5 540.5 M656.9 383.2 L691.9 445.7 M692.0 445.9 L712.1 481.6 M713.4 484.0 L749.7 548.6 M636.7 390.0 L714.9 353.4 M729.7 346.5 L777.6 324.1 M793.5 316.7 L830.5 299.4 M744.5 381.2 L773.1 365.8 M780.3 362.0 L814.0 343.9 M822.4 339.4 L851.6 323.8 M672.5 457.7 L727.2 426.8 M806.2 382.3 L869.5 346.5 M689.5 489.5 L748.3 460.5 M752.7 458.3 L815.0 427.5 M824.6 422.8 L883.9 393.5 M778.1 474.7 L804.3 462.5 M811.2 459.2 L870.6 431.4 M879.4 427.2 L906.3 414.6 M718.3 543.8 L762.1 521.3 M765.5 519.6 L807.6 497.9 M821.0 491.0 L847.5 477.4 M860.5 470.7 L918.8 440.7" fill="none" stroke="#DDE1E8" stroke-width="1.6" stroke-linecap="round"/><clipPath id="rc3"><rect x="850" y="440" width="226" height="170"/></clipPath><path clip-path="url(#rc3)" d="M1031.8 331.5 L1051.1 376.5 M1058.1 392.9 L1076.2 435.3 M1081.5 447.7 L1114.8 525.7 M1130.3 561.9 L1142.3 589.8 M1145.7 597.9 L1173.0 661.8 M1007.6 342.8 L1038.1 403.5 M1040.6 408.4 L1073.0 472.8 M1075.3 477.4 L1090.7 508.0 M1096.6 519.7 L1118.6 563.3 M980.3 355.4 L1013.4 425.1 M1044.6 490.9 L1062.2 528.1 M1065.0 534.0 L1085.9 578.0 M1088.9 584.3 L1105.0 618.3 M962.0 364.1 L986.0 420.7 M991.3 433.3 L1023.4 509.1 M1023.6 509.4 L1046.5 563.3 M1050.4 572.7 L1084.7 653.5 M942.1 373.2 L974.0 442.4 M1005.7 511.4 L1033.4 571.5 M1039.0 583.7 L1067.1 644.8 M914.0 386.3 L945.4 454.1 M947.9 459.6 L984.9 539.4 M988.7 547.5 L1013.9 601.8 M1019.2 613.4 L1054.8 690.0 M928.8 482.5 L962.7 562.9 M997.0 644.1 L1017.4 692.3 M854.2 414.2 L869.8 446.6 M892.7 494.0 L912.2 534.6 M917.3 545.1 L950.1 613.0 M950.6 614.1 L974.4 663.4 M835.2 423.2 L852.2 456.0 M854.2 459.8 L887.1 523.4 M888.9 527.0 L905.9 559.9 M907.4 562.6 L941.5 628.6 M946.0 637.4 L981.9 706.7 M816.5 431.9 L834.6 475.5 M841.2 491.5 L862.8 543.5 M899.0 630.8 L921.7 685.5 M923.6 690.1 L957.8 772.6 M821.8 497.7 L849.2 556.0 M850.4 558.5 L869.9 600.1 M876.6 614.3 L901.5 667.2 M909.1 683.4 L927.1 721.7 M847.2 411.6 L887.2 397.0 M888.8 396.4 L941.6 377.1 M1022.2 347.6 L1093.9 321.5 M779.1 460.4 L815.3 447.2 M862.6 429.9 L905.0 414.5 M910.2 412.6 L962.2 393.6 M968.3 391.4 L1033.7 367.5 M797.3 505.3 L842.2 484.4 M846.1 482.6 L902.0 456.6 M986.7 417.3 L1045.7 389.9 M1051.8 387.0 L1106.3 361.7 M804.6 523.6 L843.5 508.7 M908.5 483.7 L975.8 457.9 M989.7 452.5 L1018.6 441.4 M1020.2 440.8 L1084.7 416.1 M814.9 549.0 L874.6 527.2 M878.4 525.9 L911.5 513.8 M953.5 498.5 L1008.3 478.6 M1021.3 473.9 L1094.9 447.1 M831.0 588.6 L877.3 567.1 M893.3 559.7 L962.6 527.5 M972.5 522.9 L996.3 511.9 M1001.8 509.3 L1062.9 480.9 M920.5 584.5 L964.3 565.0 M1108.8 500.5 L1187.7 465.3 M851.0 638.6 L908.3 613.6 M913.7 611.2 L992.0 577.1 M1032.2 559.6 L1109.0 526.2 M1118.3 522.2 L1174.6 497.6 M864.3 671.2 L924.5 649.2 M1045.2 605.0 L1102.1 584.2 M880.7 711.9 L943.8 684.9 M1008.7 657.2 L1043.6 642.2 M1046.0 641.2 L1092.1 621.5 M1094.9 620.3 L1149.0 597.2" fill="none" stroke="#DDE1E8" stroke-width="1.6" stroke-linecap="round"/><clipPath id="rc4"><rect x="369" y="500" width="171" height="140"/></clipPath><path clip-path="url(#rc4)" d="M322.4 503.4 L388.8 485.9 M405.5 481.5 L467.3 465.2 M474.5 463.3 L537.9 446.6 M430.2 505.9 L480.6 495.1 M490.6 493.0 L572.6 475.4 M331.6 546.8 L376.8 539.1 M389.7 537.0 L472.0 523.1 M482.6 521.3 L555.5 509.0 M337.2 573.1 L389.6 559.8 M396.5 558.1 L424.0 551.1 M433.2 548.7 L472.5 538.8 M479.4 537.0 L518.5 527.1 M534.4 523.0 L619.5 501.4 M340.5 588.7 L379.3 581.8 M389.3 580.0 L471.7 565.2 M485.7 562.7 L518.3 556.8 M535.1 553.8 L559.8 549.4 M565.1 548.4 L610.5 540.3 M348.0 624.5 L395.0 614.0 M500.8 590.3 L555.2 578.1 M354.8 656.3 L409.1 643.9 M424.5 640.4 L512.0 620.4 M560.5 609.3 L591.6 602.2 M360.5 682.7 L430.8 670.6 M443.1 668.4 L527.8 653.8 M529.2 653.6 L568.2 646.9 M580.8 644.7 L618.0 638.3 M530.1 511.6 L540.9 550.0 M545.5 566.0 L564.0 631.8 M478.7 443.9 L485.9 471.0 M498.1 517.4 L509.3 559.4 M510.4 563.7 L521.4 605.4 M464.8 508.8 L473.3 544.5 M476.0 555.8 L487.3 602.8 M490.6 616.5 L504.3 673.5 M412.8 461.6 L435.1 545.5 M438.7 559.1 L447.9 593.6 M449.0 597.7 L462.8 649.6 M466.4 663.2 L486.0 737.1 M388.8 468.0 L403.2 523.6 M405.8 534.0 L423.8 603.2 M427.7 618.4 L436.9 654.0 M437.0 654.3 L451.3 709.7 M389.5 576.1 L397.3 609.7 M397.5 610.4 L407.9 654.7 M410.1 663.9 L419.7 705.0 M319.7 486.6 L331.8 526.4 M358.8 614.9 L373.9 664.3 M375.0 668.1 L400.8 752.3" fill="none" stroke="#DDE1E8" stroke-width="1.6" stroke-linecap="round"/><clipPath id="rc5"><rect x="369" y="620" width="161" height="150"/></clipPath><path clip-path="url(#rc5)" d="M370.3 576.6 L422.2 593.4 M464.0 606.9 L512.1 622.4 M519.4 624.7 L547.9 633.9 M565.0 639.4 L636.0 662.3 M364.7 591.7 L402.9 605.9 M418.6 611.7 L464.2 628.6 M480.8 634.7 L541.5 657.2 M548.3 659.7 L611.3 683.0 M475.6 664.5 L545.8 693.2 M551.5 695.5 L585.7 709.5 M346.5 642.0 L399.1 659.3 M406.7 661.9 L491.7 690.0 M506.5 694.8 L542.8 706.9 M544.1 707.3 L610.5 729.2 M340.7 657.9 L380.6 670.9 M396.4 676.1 L464.4 698.3 M510.0 713.2 L581.1 736.4 M335.5 671.9 L382.8 688.1 M397.8 693.2 L441.5 708.2 M450.3 711.2 L477.3 720.5 M481.4 721.9 L507.6 730.9 M517.7 734.4 L543.3 743.1 M550.5 745.6 L607.6 765.2 M330.0 687.2 L393.6 712.0 M397.0 713.4 L437.3 729.1 M494.6 751.5 L535.5 767.5 M539.1 768.9 L564.9 779.0 M321.2 711.5 L403.2 744.4 M414.4 748.9 L493.1 780.4 M313.3 732.9 L342.2 743.8 M348.8 746.3 L375.8 756.6 M381.3 758.7 L434.9 779.0 M437.6 780.0 L485.4 798.2 M488.2 799.3 L552.0 823.5 M304.7 756.5 L337.5 768.2 M349.4 772.4 L406.8 792.8 M407.2 792.9 L454.8 809.8 M455.8 810.2 L504.2 827.3 M512.6 830.3 L572.0 851.4 M290.8 668.9 L358.0 620.2 M361.8 617.5 L417.3 577.3 M306.4 690.9 L369.9 650.7 M379.3 644.7 L423.0 617.1 M499.7 568.5 L570.7 523.5 M370.6 693.7 L400.9 671.5 M410.7 664.3 L443.2 640.6 M451.2 634.8 L492.0 605.0 M499.2 599.7 L553.5 560.0 M345.1 746.3 L418.8 698.4 M424.1 695.0 L493.4 649.9 M504.2 642.9 L563.0 604.7 M372.7 785.7 L424.9 746.3 M433.0 740.2 L472.1 710.6 M482.9 702.5 L530.5 666.6 M534.1 663.9 L570.9 636.1 M386.8 805.8 L410.1 787.8 M420.2 780.1 L445.8 760.3 M456.8 751.8 L501.4 717.5 M513.7 708.0 L578.3 658.2 M400.3 825.2 L442.6 797.5 M446.3 795.0 L506.2 755.9 M585.9 703.7 L637.7 669.8" fill="none" stroke="#DDE1E8" stroke-width="1.6" stroke-linecap="round"/><clipPath id="rc6"><rect x="520" y="560" width="180" height="210"/></clipPath><path clip-path="url(#rc6)" d="M672.6 485.2 L684.0 516.3 M688.2 527.7 L702.0 565.2 M729.9 641.0 L741.5 672.6 M744.1 679.7 L766.9 741.7 M629.8 502.6 L659.6 567.5 M660.0 568.1 L678.2 607.7 M685.7 624.0 L699.4 653.8 M699.6 654.2 L724.8 709.0 M614.5 508.6 L639.6 568.8 M646.4 585.1 L665.8 631.5 M669.6 640.6 L699.2 711.6 M714.5 748.2 L736.4 800.6 M601.6 513.9 L614.2 545.8 M616.1 550.4 L630.7 587.4 M633.1 593.5 L648.5 632.4 M649.0 633.5 L679.5 710.7 M680.1 712.0 L693.6 746.3 M582.7 521.6 L600.2 569.2 M603.6 578.5 L626.9 642.0 M553.8 533.4 L568.9 566.0 M569.5 567.2 L589.8 611.1 M592.1 616.1 L616.6 669.2 M618.2 672.6 L654.9 751.9 M542.5 537.8 L569.7 611.8 M589.2 664.8 L613.6 731.3 M619.3 746.7 L628.5 771.6 M629.9 775.4 L647.2 822.6 M507.2 552.0 L532.9 613.3 M534.9 617.9 L567.4 695.2 M568.1 696.8 L586.2 739.9 M587.7 743.4 L616.1 810.9 M485.5 560.9 L499.6 592.1 M502.8 599.2 L513.4 622.5 M516.4 629.1 L535.3 670.9 M560.6 726.7 L591.1 794.1 M471.6 566.4 L484.6 600.6 M488.9 612.0 L519.6 693.0 M538.8 743.6 L562.3 805.6 M566.4 816.4 L580.2 852.7 M440.5 578.9 L461.4 632.8 M462.2 634.8 L491.0 708.8 M493.9 716.4 L518.6 780.0 M521.1 786.5 L535.6 823.7 M539.3 833.3 L560.5 887.9 M427.5 612.7 L505.4 577.3 M513.1 573.8 L594.6 536.8 M672.7 501.3 L746.8 467.6 M443.4 646.6 L514.6 611.0 M608.5 564.0 L688.6 523.9 M459.1 680.3 L528.4 645.7 M537.0 641.4 L609.8 605.1 M614.3 602.9 L674.1 573.1 M683.0 568.6 L751.2 534.6 M471.9 707.8 L541.1 678.6 M556.2 672.2 L626.9 642.4 M633.0 639.8 L662.0 627.6 M485.3 736.6 L557.6 701.8 M673.5 646.1 L707.6 629.7 M714.6 626.4 L738.0 615.1 M743.1 612.6 L802.5 584.1 M502.3 772.8 L532.0 757.7 M539.5 753.9 L569.2 738.8 M584.3 731.2 L642.0 701.9 M645.1 700.3 L725.1 659.7 M736.9 653.7 L780.1 631.8 M564.1 763.8 L614.0 741.4 M629.5 734.4 L672.8 714.9 M676.7 713.2 L733.8 687.5 M520.8 812.5 L567.3 793.4 M577.3 789.3 L627.3 768.6 M634.3 765.8 L674.3 749.3 M690.2 742.7 L730.9 725.9 M742.1 721.3 L779.9 705.7 M782.1 704.8 L859.0 673.1 M533.6 839.9 L607.4 808.5 M646.8 791.7 L691.6 772.6 M703.6 767.5 L766.6 740.7 M781.4 734.3 L861.2 700.3" fill="none" stroke="#DDE1E8" stroke-width="1.6" stroke-linecap="round"/><clipPath id="rc7"><rect x="690" y="590" width="170" height="180"/></clipPath><path clip-path="url(#rc7)" d="M822.2 511.4 L843.0 551.9 M799.2 523.1 L830.5 583.1 M838.8 598.9 L856.6 633.1 M857.8 635.4 L881.3 680.3 M882.0 681.6 L898.6 713.4 M903.8 723.3 L937.7 788.2 M777.0 534.5 L791.0 564.1 M832.6 652.1 L844.0 676.1 M848.1 684.8 L873.7 738.7 M879.8 751.6 L898.9 791.9 M745.2 550.7 L760.2 577.6 M762.8 582.2 L799.7 648.1 M803.3 654.6 L817.3 679.5 M821.2 686.6 L851.1 740.1 M719.2 563.9 L742.4 609.8 M749.4 623.7 L789.0 701.9 M810.8 745.0 L843.1 808.7 M726.8 623.1 L766.0 692.9 M769.7 699.4 L784.5 725.7 M785.4 727.4 L827.0 801.3 M683.2 582.4 L719.3 661.0 M723.1 669.2 L758.0 745.3 M760.3 750.2 L790.8 816.5 M656.5 595.8 L678.6 638.8 M695.7 672.1 L722.7 724.9 M726.0 731.3 L744.0 766.4 M747.1 772.4 L767.8 812.8 M769.7 816.5 L803.3 882.1 M641.2 603.8 L651.7 627.0 M658.7 642.8 L678.7 687.3 M681.5 693.3 L699.7 734.0 M704.1 743.7 L722.7 785.1 M726.5 793.6 L756.9 861.1 M614.1 617.5 L650.6 685.0 M657.9 698.6 L682.3 743.6 M709.7 794.4 L731.7 835.2 M614.5 648.4 L679.4 611.5 M786.8 550.3 L841.3 519.3 M705.6 628.6 L773.8 595.4 M785.9 589.5 L830.5 567.9 M837.6 564.4 L867.0 550.2 M637.9 694.5 L707.0 655.7 M715.6 650.9 L743.8 635.0 M748.7 632.3 L824.6 589.7 M839.1 581.6 L872.8 562.6 M656.2 730.4 L727.6 690.4 M728.1 690.1 L774.4 664.2 M785.0 658.2 L859.4 616.5 M870.2 610.5 L914.1 585.9 M673.2 763.8 L728.4 733.2 M733.8 730.2 L765.0 712.9 M774.3 707.7 L825.8 679.2 M834.8 674.2 L904.6 635.5 M682.8 782.3 L725.0 763.4 M728.9 761.7 L767.2 744.5 M776.6 740.3 L814.7 723.3 M828.3 717.2 L873.5 696.9 M880.6 693.8 L940.1 667.1 M704.9 826.2 L755.3 800.2 M767.3 794.0 L795.5 779.5 M809.0 772.5 L833.3 760.0 M842.4 755.3 L896.4 727.5 M898.9 726.2 L976.0 686.4 M713.3 842.4 L748.7 825.7 M757.4 821.6 L815.9 794.0 M900.2 754.1 L963.3 724.3" fill="none" stroke="#DDE1E8" stroke-width="1.6" stroke-linecap="round"/><clipPath id="rc8"><rect x="850" y="600" width="226" height="170"/></clipPath><path clip-path="url(#rc8)" d="M1041.7 495.4 L1066.3 563.4 M1067.8 567.6 L1076.7 592.3 M1078.3 596.6 L1093.2 638.1 M1094.1 640.3 L1113.2 693.4 M1115.0 698.3 L1129.6 738.7 M1011.5 507.5 L1038.5 575.0 M1042.9 586.1 L1074.3 664.8 M1089.0 701.7 L1117.2 772.5 M992.7 515.2 L1023.1 596.0 M1026.7 605.5 L1043.5 650.1 M1076.1 736.8 L1097.8 794.6 M974.3 522.7 L984.1 549.9 M984.5 551.1 L993.6 576.4 M1027.9 671.8 L1047.8 727.2 M1051.0 736.1 L1063.5 771.0 M1065.7 777.0 L1085.1 831.0 M946.4 533.8 L957.8 561.7 M961.5 571.0 L994.7 652.7 M995.6 655.0 L1012.3 696.2 M931.1 540.0 L954.9 598.7 M1024.9 771.4 L1034.9 796.0 M1040.5 809.8 L1066.7 874.5 M907.4 549.7 L916.0 573.2 M953.9 676.5 L970.0 720.4 M970.1 720.7 L996.0 791.1 M999.6 801.0 L1020.0 856.6 M876.2 562.2 L909.2 637.7 M910.2 640.1 L926.8 678.1 M932.5 691.1 L951.2 733.8 M955.9 744.6 L972.6 783.0 M974.5 787.2 L1007.3 862.4 M857.3 569.9 L885.5 636.3 M891.1 649.4 L914.6 704.7 M919.9 717.4 L935.9 755.0 M938.9 761.9 L973.8 844.1 M835.7 578.7 L852.1 626.1 M856.7 639.6 L881.5 711.3 M886.2 724.7 L902.4 771.7 M905.9 781.8 L929.8 850.9 M813.4 587.5 L832.0 633.6 M838.2 648.9 L851.1 680.7 M892.1 782.2 L924.1 861.4 M777.5 602.1 L791.2 633.1 M830.1 721.1 L850.0 766.1 M852.0 770.6 L886.7 849.3 M888.1 852.3 L907.3 895.9 M773.8 607.6 L829.6 585.2 M898.7 557.5 L935.4 542.8 M1018.1 509.7 L1050.9 496.5 M782.6 629.2 L865.4 598.7 M875.6 594.9 L950.6 567.2 M1035.3 536.0 L1105.3 510.2 M795.3 660.5 L861.9 630.9 M906.3 611.2 L967.9 583.8 M970.9 582.4 L994.7 571.9 M995.4 571.6 L1033.7 554.6 M1039.8 551.9 L1090.7 529.2 M802.1 677.2 L861.2 656.0 M870.3 652.7 L922.0 634.2 M989.8 610.0 L1067.3 582.2 M1075.9 579.1 L1159.7 549.1 M819.8 721.3 L877.5 696.1 M893.1 689.3 L933.0 671.9 M944.3 666.9 L987.9 647.9 M996.1 644.3 L1074.0 610.3 M1080.2 607.6 L1103.2 597.5 M830.3 747.3 L881.6 727.3 M889.9 724.1 L942.4 703.7 M958.7 697.4 L999.0 681.8 M1000.4 681.2 L1072.2 653.4 M1086.1 648.0 L1157.8 620.2 M908.2 753.5 L960.3 732.0 M974.3 726.2 L1027.6 704.2 M932.3 784.1 L1005.2 756.5 M1009.3 754.9 L1088.6 724.9 M871.3 848.5 L934.4 826.3 M990.8 806.4 L1033.4 791.4 M1125.9 758.8 L1157.1 747.8" fill="none" stroke="#DDE1E8" stroke-width="1.6" stroke-linecap="round"/><clipPath id="rc9"><rect x="369" y="760" width="201" height="188"/></clipPath><path clip-path="url(#rc9)" d="M513.9 668.9 L550.2 742.3 M557.7 757.5 L587.1 817.1 M590.2 823.3 L611.5 866.4 M612.7 869.0 L646.7 937.7 M485.5 684.0 L511.9 736.2 M514.1 740.6 L530.9 773.8 M536.5 784.8 L575.4 861.8 M582.9 876.7 L621.0 951.9 M464.4 695.4 L496.5 763.5 M498.7 768.1 L523.8 821.4 M524.1 822.0 L558.6 895.3 M562.3 903.0 L593.5 969.4 M430.9 713.1 L453.7 753.3 M454.2 754.2 L477.9 796.0 M486.3 810.9 L519.2 868.8 M522.8 875.1 L542.6 910.2 M551.2 925.2 L567.4 953.9 M446.5 798.6 L465.7 835.2 M474.0 851.1 L501.5 903.7 M507.9 915.9 L521.3 941.3 M525.9 950.1 L545.7 987.9 M391.2 734.2 L421.0 794.3 M424.6 801.7 L448.3 849.2 M491.2 935.8 L504.4 962.3 M509.9 973.5 L533.7 1021.4 M367.0 747.0 L389.9 792.9 M395.3 803.8 L424.4 862.0 M430.1 873.4 L445.0 903.3 M448.8 910.9 L460.5 934.3 M463.6 940.5 L488.4 990.2 M335.0 764.0 L364.8 819.7 M373.1 835.4 L388.6 864.3 M390.4 867.8 L428.7 939.5 M458.3 995.0 L494.3 1062.5 M314.0 775.2 L339.9 823.1 M345.2 833.0 L369.8 878.5 M376.4 890.7 L402.3 938.7 M409.9 952.7 L435.8 1000.7 M292.5 786.6 L312.3 826.2 M319.9 841.5 L350.2 902.0 M353.7 909.0 L383.8 969.4 M419.6 1041.0 L451.5 1104.7 M292.0 769.2 L329.6 757.5 M458.2 717.4 L506.3 702.4 M518.6 698.6 L589.7 676.4 M299.8 793.0 L358.6 775.3 M487.6 736.4 L546.8 718.6 M555.3 716.0 L589.7 705.6 M312.9 833.3 L385.9 807.8 M388.4 806.9 L449.2 785.7 M458.2 782.5 L542.6 753.0 M558.8 747.4 L604.0 731.6 M392.9 831.6 L433.9 819.2 M443.1 816.4 L468.6 808.7 M479.9 805.2 L513.1 795.2 M528.1 790.6 L610.1 765.8 M329.6 884.4 L401.4 857.6 M405.8 856.0 L459.0 836.1 M536.3 807.2 L602.6 782.5 M341.7 921.9 L394.2 903.1 M401.7 900.4 L475.0 874.2 M485.3 870.5 L569.2 840.4 M573.0 839.1 L634.5 817.1 M415.4 924.0 L480.9 902.2 M486.9 900.2 L554.2 877.9 M569.3 872.9 L646.9 847.2 M356.1 966.5 L383.0 958.4 M384.1 958.1 L460.4 935.2 M470.5 932.2 L500.3 923.2 M506.4 921.4 L591.7 895.9 M606.6 891.4 L634.4 883.1 M370.1 1009.3 L410.3 994.8 M422.0 990.5 L465.2 974.8 M470.1 973.1 L527.9 952.1 M534.0 949.9 L572.7 935.8 M577.1 934.2 L601.6 925.3 M611.7 921.7 L651.6 907.2" fill="none" stroke="#DDE1E8" stroke-width="1.6" stroke-linecap="round"/><clipPath id="rc10"><rect x="560" y="760" width="210" height="188"/></clipPath><path clip-path="url(#rc10)" d="M713.9 665.3 L752.9 738.2 M758.2 748.1 L790.2 808.0 M794.4 815.9 L818.9 861.6 M823.1 869.6 L849.3 918.5 M694.1 675.5 L710.6 711.5 M728.8 751.1 L747.0 790.7 M753.5 804.9 L786.6 877.1 M791.8 888.4 L822.4 955.1 M713.9 782.6 L726.4 809.7 M733.7 825.6 L758.9 880.4 M761.3 885.4 L795.1 959.0 M656.1 695.0 L666.6 718.6 M669.5 725.0 L696.6 785.8 M700.7 795.0 L735.8 873.6 M741.4 886.2 L767.2 944.1 M630.5 707.8 L658.2 761.4 M663.0 770.6 L693.3 829.3 M695.1 832.9 L726.1 893.0 M726.7 894.2 L760.9 960.4 M602.0 722.5 L634.6 780.3 M641.8 793.1 L677.1 855.9 M692.3 882.7 L711.0 915.9 M583.8 731.6 L621.8 808.5 M650.5 866.4 L682.1 930.5 M686.1 938.4 L725.1 1017.3 M554.7 746.4 L567.6 772.8 M594.1 827.4 L632.9 907.1 M637.9 917.3 L659.7 962.1 M663.6 970.1 L676.2 996.0 M679.3 1002.3 L705.3 1055.8 M519.6 764.3 L541.3 805.4 M546.2 814.8 L585.6 889.6 M589.8 897.5 L616.6 948.4 M621.3 957.4 L640.2 993.3 M503.3 772.6 L539.8 843.6 M545.9 855.6 L580.0 921.8 M580.4 922.6 L616.3 992.6 M617.7 995.2 L630.2 1019.6 M496.4 819.8 L538.1 893.4 M539.1 895.2 L560.5 933.2 M561.5 934.9 L580.2 968.1 M581.7 970.7 L599.4 1002.0 M602.8 1007.9 L619.9 1038.1 M488.4 782.3 L549.2 759.2 M588.7 744.3 L635.9 726.4 M651.7 720.4 L683.1 708.5 M695.0 704.0 L741.0 686.5 M756.3 680.7 L782.2 670.9 M673.1 756.3 L751.1 733.5 M508.6 844.3 L585.4 823.7 M602.1 819.2 L635.3 810.3 M678.6 798.7 L742.2 781.6 M747.8 780.1 L810.1 763.4 M521.3 883.2 L561.9 872.3 M613.4 858.4 L672.5 842.5 M672.5 842.5 L696.7 836.0 M754.9 820.3 L783.2 812.7 M787.2 811.6 L841.6 796.9 M536.9 932.1 L580.2 917.6 M585.6 915.8 L655.0 892.6 M716.3 872.2 L752.5 860.1 M755.3 859.1 L781.2 850.5 M784.3 849.5 L853.1 826.5 M552.2 978.6 L581.6 967.6 M589.3 964.6 L662.9 936.9 M672.1 933.5 L747.6 905.0 M749.5 904.3 L811.9 880.8 M815.8 879.3 L841.0 869.8 M628.1 984.7 L658.9 973.4 M671.2 968.8 L748.6 940.3 M758.4 936.7 L834.5 908.6 M567.4 1025.6 L630.8 1007.0 M631.0 1006.9 L684.7 991.2 M695.1 988.1 L750.9 971.7 M751.9 971.4 L784.1 962.0" fill="none" stroke="#DDE1E8" stroke-width="1.6" stroke-linecap="round"/><clipPath id="rc11"><rect x="760" y="760" width="316" height="188"/></clipPath><path clip-path="url(#rc11)" d="M1001.5 649.2 L1027.1 693.2 M1030.3 698.8 L1075.5 776.5 M1079.1 782.8 L1094.3 808.8 M1095.7 811.2 L1113.1 841.2 M1118.5 850.5 L1156.1 915.1 M959.1 605.8 L987.1 654.8 M988.3 656.9 L1029.3 728.9 M1029.9 729.9 L1064.0 789.8 M1068.0 796.7 L1099.8 852.6 M1108.2 867.3 L1131.3 907.9 M1138.3 920.1 L1154.2 948.0 M938.1 618.9 L975.8 685.4 M976.2 686.1 L1008.0 741.9 M1010.6 746.6 L1052.4 820.2 M1081.3 871.0 L1113.5 927.7 M946.2 703.5 L969.4 737.5 M972.6 742.3 L992.8 772.0 M1000.4 783.3 L1026.8 822.1 M1033.8 832.5 L1074.4 892.3 M1075.6 894.1 L1093.1 919.9 M1101.5 932.2 L1133.6 979.6 M884.5 652.4 L933.8 725.7 M935.1 727.6 L974.5 786.2 M980.7 795.4 L1022.6 857.7 M1031.4 870.7 L1080.6 943.8 M1087.1 953.5 L1114.6 994.4 M938.3 781.6 L974.5 837.7 M1003.8 882.8 L1028.0 920.4 M1029.2 922.1 L1047.7 950.9 M1056.5 964.4 L1073.0 989.9 M854.8 671.0 L878.5 712.6 M880.3 715.8 L902.1 753.9 M904.6 758.2 L940.5 821.1 M946.2 831.1 L984.5 898.1 M986.2 901.1 L1002.5 929.6 M1009.5 941.9 L1041.4 997.7 M822.0 691.3 L836.9 714.2 M840.4 719.5 L888.5 793.4 M897.6 807.3 L942.0 875.5 M943.3 877.4 L985.6 942.4 M991.0 950.8 L1008.1 977.0 M804.7 702.4 L841.0 767.2 M845.1 774.6 L882.1 840.5 M883.5 843.0 L912.5 894.9 M917.1 903.0 L951.9 965.2 M796.7 755.6 L827.2 799.6 M833.0 808.0 L857.6 843.5 M906.5 914.1 L941.0 963.9 M950.1 977.0 L966.9 1001.3 M974.8 1012.7 L1010.9 1064.8 M753.8 734.0 L784.4 779.8 M791.2 789.9 L809.0 816.4 M810.9 819.4 L844.1 868.9 M926.9 992.8 L947.3 1023.2 M955.5 1035.4 L1003.2 1106.8 M788.9 820.6 L807.3 848.3 M809.7 851.9 L846.9 907.8 M854.6 919.5 L884.2 963.9 M888.8 971.0 L916.0 1011.8 M922.8 1022.1 L962.2 1081.4 M718.8 756.0 L747.4 797.3 M747.7 797.7 L764.9 822.5 M774.6 836.5 L819.8 901.8 M823.1 906.4 L851.0 946.7 M892.4 1006.4 L913.2 1036.4 M913.3 1036.6 L955.9 1098.1 M693.0 772.1 L714.1 802.8 M722.0 814.2 L763.3 874.3 M767.9 881.0 L795.1 920.6 M904.7 1080.1 L948.5 1143.8 M684.8 777.2 L719.4 837.1 M727.5 851.1 L768.1 921.5 M768.5 922.3 L790.3 960.1 M794.1 966.6 L837.2 1041.3 M844.5 1054.1 L859.3 1079.8 M865.9 1091.2 L889.4 1132.0 M663.1 790.6 L695.6 841.6 M701.1 850.2 L724.7 887.2 M731.2 897.5 L756.4 936.9 M760.0 942.7 L782.9 978.6 M785.8 983.1 L809.6 1020.5 M809.9 1020.9 L840.2 1068.3 M848.7 1081.7 L874.7 1122.5 M659.0 782.9 L712.9 753.9 M718.3 751.0 L783.3 716.0 M877.2 665.5 L937.8 632.9 M946.3 628.3 L1001.4 598.6 M686.8 830.8 L749.0 790.9 M758.0 785.1 L828.7 739.7 M880.0 706.8 L931.9 673.5 M943.3 666.2 L991.1 635.5 M995.7 632.5 L1065.1 588.0 M697.5 849.4 L764.3 814.3 M765.6 813.6 L828.6 780.5 M829.5 780.0 L905.4 740.1 M906.0 739.9 L955.7 713.7 M718.9 886.7 L777.5 851.0 M782.7 847.8 L826.8 820.9 M977.5 729.1 L1012.4 707.8 M1022.3 701.8 L1077.3 668.3 M735.5 915.1 L761.4 898.3 M772.5 891.1 L839.4 847.9 M890.7 814.7 L926.1 791.8 M940.7 782.4 L1014.7 734.5 M1021.9 729.9 L1083.6 690.0 M743.7 929.8 L802.7 895.9 M982.3 792.9 L1050.3 753.8 M759.2 956.2 L820.2 917.1 M833.8 908.4 L909.0 860.2 M919.3 853.7 L976.7 816.9 M982.3 813.3 L1038.4 777.4 M767.8 971.5 L827.6 936.6 M829.3 935.6 L851.1 922.9 M854.9 920.6 L889.2 900.6 M999.0 836.5 L1061.6 799.9 M1067.1 796.6 L1107.8 772.9 M776.4 986.3 L850.1 945.6 M940.3 895.8 L1018.5 852.6 M1018.8 852.5 L1075.6 821.1 M1089.2 813.6 L1145.9 782.2 M797.0 1022.1 L874.7 978.6 M961.0 930.3 L1033.7 889.6 M1033.8 889.5 L1074.1 866.9 M1089.7 858.2 L1133.9 833.4 M811.5 1047.2 L854.9 1021.0 M914.3 985.1 L990.0 939.3 M998.2 934.3 L1032.2 913.8 M1036.8 911.0 L1108.0 867.9 M1115.5 863.4 L1166.1 832.8 M871.3 1036.0 L931.8 999.8 M945.2 991.8 L1008.0 954.2 M1088.4 906.1 L1153.1 867.3 M917.6 1046.4 L943.4 1031.9 M947.4 1029.6 L981.6 1010.4 M991.1 1005.0 L1031.0 982.6" fill="none" stroke="#DDE1E8" stroke-width="1.6" stroke-linecap="round"/><path d="M819.0 392.0 L840.0 416.8 L880.0 420.8 L900.0 430.0 L915.0 450.0 L934.0 484.0 L958.0 537.0 L968.0 560.0" fill="none" stroke="#9ED5E8" stroke-width="3.2" stroke-linejoin="round" stroke-linecap="round" /><path d="M960.0 570.0 L994.0 629.0" fill="none" stroke="#9ED5E8" stroke-width="8" stroke-linejoin="round" stroke-linecap="round" /><path d="M994.0 629.0 L1041.0 760.0 L1076.0 873.0" fill="none" stroke="#9ED5E8" stroke-width="3" stroke-linejoin="round" stroke-linecap="round" /><path d="M953.0 388.0 L980.6 406.0 L1034.0 441.0 L1078.0 453.0" fill="none" stroke="#9ED5E8" stroke-width="7" stroke-linejoin="round" stroke-linecap="round" /><path d="M1034.0 450.0 L1076.0 448.0 L1076.0 474.0 L1050.0 472.0 Z" fill="#9ED5E8" /><path d="M982.0 417.0 L1000.7 473.0 L1026.0 537.0 L1074.0 572.0" fill="none" stroke="#BFE3D6" stroke-width="3" stroke-linejoin="round" stroke-linecap="round" /><path d="M1060.0 870.0 L1068.0 900.0 L1076.0 905.0" fill="none" stroke="#9ED5E8" stroke-width="5" stroke-linejoin="round" stroke-linecap="round" /><rect x="819" y="392" width="14" height="14" rx="2" fill="#9ED5E8"/><path d="M369.0 445.0 L452.0 396.0 L475.0 390.0" fill="none" stroke="#D9DEE5" stroke-width="3.5" stroke-linejoin="round" stroke-linecap="round" /><path d="M369.0 510.5 L449.0 492.0 L556.5 488.0 L609.0 473.0 L660.0 455.0 L754.0 441.0 L821.0 403.0" fill="none" stroke="#D9DEE5" stroke-width="3" stroke-linejoin="round" stroke-linecap="round" /><path d="M369.0 529.0 L402.0 536.0 L436.0 522.0 L520.0 535.0 L561.0 548.0 L620.0 565.0 L700.0 600.0" fill="none" stroke="#D9DEE5" stroke-width="4.5" stroke-linejoin="round" stroke-linecap="round" /><path d="M562.0 390.0 L588.0 456.0 L609.0 484.0 L630.0 520.0" fill="none" stroke="#D2D6DC" stroke-width="6" stroke-linejoin="round" stroke-linecap="round" /><path d="M624.5 390.0 L666.0 523.0 L700.0 610.0 L725.0 670.0" fill="none" stroke="#D9DEE5" stroke-width="4" stroke-linejoin="round" stroke-linecap="round" /><path d="M663.0 390.0 L714.0 510.0 L739.0 580.0 L760.0 650.0 L778.0 700.0" fill="none" stroke="#D9DEE5" stroke-width="4.5" stroke-linejoin="round" stroke-linecap="round" /><path d="M720.0 690.0 L754.0 758.0 L840.0 812.0 L934.0 899.0 L969.0 948.0" fill="none" stroke="#D2D6DC" stroke-width="6.5" stroke-linejoin="round" stroke-linecap="round" /><path d="M877.5 443.6 L987.0 398.0 L1012.0 390.0" fill="none" stroke="#D9DEE5" stroke-width="4" stroke-linejoin="round" stroke-linecap="round" /><path d="M728.0 390.0 L754.0 443.6 L731.0 497.0 L720.0 540.0" fill="none" stroke="#D9DEE5" stroke-width="3" stroke-linejoin="round" stroke-linecap="round" /><path d="M768.7 454.0 L840.0 416.8 L900.0 400.0" fill="none" stroke="#D9DEE5" stroke-width="3" stroke-linejoin="round" stroke-linecap="round" /><path d="M787.5 426.0 L805.0 475.7" fill="none" stroke="#D9DEE5" stroke-width="3" stroke-linejoin="round" stroke-linecap="round" /><path d="M880.0 420.0 L891.0 449.0 L940.0 560.0 L978.0 637.0 L1007.0 737.0 L1025.0 798.0 L1068.0 948.0" fill="none" stroke="#D9DEE5" stroke-width="4" stroke-linejoin="round" stroke-linecap="round" /><path d="M933.7 550.7 L1076.0 507.9" fill="none" stroke="#D9DEE5" stroke-width="4" stroke-linejoin="round" stroke-linecap="round" /><path d="M974.0 635.6 L1076.0 605.0" fill="none" stroke="#D9DEE5" stroke-width="3" stroke-linejoin="round" stroke-linecap="round" /><path d="M947.0 760.0 L1076.0 717.0" fill="none" stroke="#D9DEE5" stroke-width="3" stroke-linejoin="round" stroke-linecap="round" /><path d="M897.6 778.0 L1006.0 874.5 L1080.0 948.0" fill="none" stroke="#D2D6DC" stroke-width="5" stroke-linejoin="round" stroke-linecap="round" /><path d="M1000.7 570.0 L1067.7 717.0" fill="none" stroke="#D9DEE5" stroke-width="3" stroke-linejoin="round" stroke-linecap="round" /><path d="M369.0 634.0 L452.0 662.4 L503.0 677.0 L609.0 714.6 L650.0 730.0" fill="none" stroke="#D9DEE5" stroke-width="3" stroke-linejoin="round" stroke-linecap="round" /><path d="M409.0 688.0 L436.0 674.5 L511.0 657.0 L586.0 607.5 L625.0 585.0" fill="none" stroke="#D9DEE5" stroke-width="3" stroke-linejoin="round" stroke-linecap="round" /><path d="M400.0 760.0 L449.0 733.0 L536.0 697.0 L609.0 676.0 L660.0 660.0" fill="none" stroke="#D9DEE5" stroke-width="3" stroke-linejoin="round" stroke-linecap="round" /><path d="M446.7 702.6 L496.0 681.0 L560.0 660.0" fill="none" stroke="#D9DEE5" stroke-width="2.5" stroke-linejoin="round" stroke-linecap="round" /><path d="M401.0 570.0 L418.5 610.0 L416.0 626.0 L390.0 632.0" fill="none" stroke="#D9DEE5" stroke-width="2.5" stroke-linejoin="round" stroke-linecap="round" /><path d="M369.0 806.0 L391.8 802.0 L489.5 786.0 L524.3 771.4 L556.5 758.0 L600.0 740.0" fill="none" stroke="#D9DEE5" stroke-width="4" stroke-linejoin="round" stroke-linecap="round" /><path d="M369.0 860.0 L389.0 884.0" fill="none" stroke="#D9DEE5" stroke-width="2" stroke-linejoin="round" stroke-linecap="round" /><path d="M389.0 884.0 L462.7 869.0 L554.0 847.7 L609.0 833.0 L700.0 810.0" fill="none" stroke="#D9DEE5" stroke-width="4" stroke-linejoin="round" stroke-linecap="round" /><path d="M720.5 838.4 L774.0 948.0" fill="none" stroke="#D9DEE5" stroke-width="4" stroke-linejoin="round" stroke-linecap="round" /><path d="M600.0 925.4 L840.0 867.8 L900.0 850.0" fill="none" stroke="#D9DEE5" stroke-width="3" stroke-linejoin="round" stroke-linecap="round" /><path d="M866.8 825.0 L920.0 787.5 L960.5 758.0 L990.0 700.0" fill="none" stroke="#D9DEE5" stroke-width="3" stroke-linejoin="round" stroke-linecap="round" /><path d="M928.4 570.0 L931.0 614.0 L974.0 637.0" fill="none" stroke="#D9DEE5" stroke-width="3" stroke-linejoin="round" stroke-linecap="round" /><path d="M920.0 621.0 L980.6 578.0" fill="none" stroke="#D9DEE5" stroke-width="3" stroke-linejoin="round" stroke-linecap="round" /><path d="M369.0 817.0 L391.8 802.0" fill="none" stroke="#D9DEE5" stroke-width="2" stroke-linejoin="round" stroke-linecap="round" /><path d="M369.0 560.0 L430.0 575.0 L470.0 600.0 L500.0 640.0" fill="none" stroke="#D9DEE5" stroke-width="2" stroke-linejoin="round" stroke-linecap="round" /><path d="M714.0 690.0 L745.0 745.0 L790.0 790.0" fill="none" stroke="#D0D2D7" stroke-width="10" stroke-linejoin="round" stroke-linecap="round" opacity="0.6"/><rect x="661" y="417" width="34.0" height="12.7" fill="#F5D469" stroke="#fff" stroke-width="0.8" rx="1"/><text x="678.0" y="426.7" font-size="9.9" fill="#3a3a3a" text-anchor="middle">D657</text><rect x="401.8" y="525" width="33.8" height="14.0" fill="#F5D469" stroke="#fff" stroke-width="0.8" rx="1"/><text x="418.7" y="536.0" font-size="10.9" fill="#3a3a3a" text-anchor="middle">D400</text><rect x="561" y="545" width="24.0" height="13.0" fill="#F5D469" stroke="#fff" stroke-width="0.8" rx="1"/><text x="573.0" y="555.0" font-size="10.1" fill="#3a3a3a" text-anchor="middle">D400</text><rect x="728.6" y="536" width="23.4" height="13.4" fill="#F5D469" stroke="#fff" stroke-width="0.8" rx="1"/><text x="740.3" y="546.4" font-size="10.5" fill="#3a3a3a" text-anchor="middle">D657</text><rect x="742.6" y="633" width="31.4" height="12.0" fill="#F5D469" stroke="#fff" stroke-width="0.8" rx="1"/><text x="758.3" y="642.0" font-size="9.4" fill="#3a3a3a" text-anchor="middle">D400</text><rect x="663" y="744" width="30.7" height="12.0" fill="#F5D469" stroke="#fff" stroke-width="0.8" rx="1"/><text x="678.4" y="753.0" font-size="9.4" fill="#3a3a3a" text-anchor="middle">D400</text><rect x="462.7" y="780.8" width="26.8" height="13.4" fill="#F5D469" stroke="#fff" stroke-width="0.8" rx="1"/><text x="476.1" y="791.2" font-size="10.5" fill="#3a3a3a" text-anchor="middle">D39</text><rect x="512.3" y="916" width="16.7" height="13.4" fill="#F5D469" stroke="#fff" stroke-width="0.8" rx="1"/><text x="520.6" y="926.4" font-size="10.5" fill="#3a3a3a" text-anchor="middle">D2</text><rect x="734" y="791.5" width="33.4" height="14.0" fill="#F5D469" stroke="#fff" stroke-width="0.8" rx="1"/><text x="750.7" y="802.5" font-size="10.9" fill="#3a3a3a" text-anchor="middle">D400</text><rect x="923" y="807.6" width="32.0" height="12.7" fill="#F5D469" stroke="#fff" stroke-width="0.8" rx="1"/><text x="939.0" y="817.3" font-size="9.9" fill="#3a3a3a" text-anchor="middle">D400</text><text x="368.0" y="433.7" transform="rotate(-23.5 368.0 433.7)" font-size="13" fill="#3C4043" font-weight="normal" textLength="84.5" lengthAdjust="spacingAndGlyphs" stroke="#F4F3F5" stroke-width="2.5" paint-order="stroke" dy="4.5">ond Pinchard</text><text x="564.8" y="394.0" transform="rotate(69.4 564.8 394.0)" font-size="13" fill="#3C4043" font-weight="normal" textLength="67.9" lengthAdjust="spacingAndGlyphs" stroke="#F4F3F5" stroke-width="2.5" paint-order="stroke" dy="4.5">de Scarpone</text><text x="613.5" y="503.0" transform="rotate(80.0 613.5 503.0)" font-size="13" fill="#3C4043" font-weight="normal" textLength="75.1" lengthAdjust="spacingAndGlyphs" stroke="#F4F3F5" stroke-width="2.5" paint-order="stroke" dy="4.5">Bd Albert 1er</text><text x="664.0" y="527.0" transform="rotate(71.2 664.0 527.0)" font-size="13" fill="#3C4043" font-weight="normal" textLength="130.4" lengthAdjust="spacingAndGlyphs" stroke="#F4F3F5" stroke-width="2.5" paint-order="stroke" dy="4.5">Quai Claude le Lorrain</text><text x="512.3" y="658.4" transform="rotate(-31.7 512.3 658.4)" font-size="13" fill="#3C4043" font-weight="normal" textLength="86.6" lengthAdjust="spacingAndGlyphs" stroke="#F4F3F5" stroke-width="2.5" paint-order="stroke" dy="4.5">Rue de la Côte</text><text x="369.0" y="634.0" transform="rotate(20.8 369.0 634.0)" font-size="13" fill="#3C4043" font-weight="normal" textLength="87.4" lengthAdjust="spacingAndGlyphs" stroke="#F4F3F5" stroke-width="2.5" paint-order="stroke" dy="4.5">v. de Boufflers</text><text x="496.2" y="674.5" transform="rotate(20.8 496.2 674.5)" font-size="13" fill="#3C4043" font-weight="normal" textLength="94.5" lengthAdjust="spacingAndGlyphs" stroke="#F4F3F5" stroke-width="2.5" paint-order="stroke" dy="4.5">Av. de Boufflers</text><text x="369.0" y="716.0" transform="rotate(-31.0 369.0 716.0)" font-size="13" fill="#3C4043" font-weight="normal" textLength="46.6" lengthAdjust="spacingAndGlyphs" stroke="#F4F3F5" stroke-width="2.5" paint-order="stroke" dy="4.5">x Arbois</text><text x="369.0" y="768.0" transform="rotate(-23.8 369.0 768.0)" font-size="13" fill="#3C4043" font-weight="normal" textLength="92.3" lengthAdjust="spacingAndGlyphs" stroke="#F4F3F5" stroke-width="2.5" paint-order="stroke" dy="4.5">ue Ernest Albert</text><text x="496.0" y="760.0" transform="rotate(-24.6 496.0 760.0)" font-size="13" fill="#3C4043" font-weight="normal" textLength="109.2" lengthAdjust="spacingAndGlyphs" stroke="#F4F3F5" stroke-width="2.5" paint-order="stroke" dy="4.5">Av. Anatole France</text><text x="524.0" y="772.0" transform="rotate(-19.1 524.0 772.0)" font-size="13" fill="#3C4043" font-weight="normal" textLength="76.9" lengthAdjust="spacingAndGlyphs" stroke="#F4F3F5" stroke-width="2.5" paint-order="stroke" dy="4.5">Rue de Laxou</text><text x="391.8" y="813.0" transform="rotate(58.6 391.8 813.0)" font-size="13" fill="#3C4043" font-weight="normal" textLength="107.8" lengthAdjust="spacingAndGlyphs" stroke="#F4F3F5" stroke-width="2.5" paint-order="stroke" dy="4.5">Bd Maréchal Foch</text><text x="369.0" y="889.0" transform="rotate(-16.0 369.0 889.0)" font-size="13" fill="#3C4043" font-weight="normal" textLength="18.1" lengthAdjust="spacingAndGlyphs" stroke="#F4F3F5" stroke-width="2.5" paint-order="stroke" dy="4.5">ppe</text><text x="831.0" y="398.0" transform="rotate(19.6 831.0 398.0)" font-size="13" fill="#3C4043" font-weight="normal" textLength="67.9" lengthAdjust="spacingAndGlyphs" stroke="#F4F3F5" stroke-width="2.5" paint-order="stroke" dy="4.5">Rue Oberlin</text><text x="878.8" y="446.0" transform="rotate(-22.0 878.8 446.0)" font-size="13" fill="#3C4043" font-weight="normal" textLength="113.5" lengthAdjust="spacingAndGlyphs" stroke="#F4F3F5" stroke-width="2.5" paint-order="stroke" dy="4.5">Viaduc Louis Marin</text><text x="984.6" y="433.0" transform="rotate(39.5 984.6 433.0)" font-size="13" fill="#3F8EA8" font-weight="normal" textLength="69.2" lengthAdjust="spacingAndGlyphs" stroke="#F4F3F5" stroke-width="2.5" paint-order="stroke" dy="4.5">La Meurthe</text><text x="1039.5" y="579.4" transform="rotate(54.9 1039.5 579.4)" font-size="13" fill="#3C4043" font-weight="normal" textLength="70.4" lengthAdjust="spacingAndGlyphs" stroke="#F4F3F5" stroke-width="2.5" paint-order="stroke" dy="4.5">Bd d'Austrasie</text><text x="744.6" y="688.0" transform="rotate(49.7 744.6 688.0)" font-size="13" fill="#3C4043" font-weight="normal" textLength="56.0" lengthAdjust="spacingAndGlyphs" stroke="#F4F3F5" stroke-width="2.5" paint-order="stroke" dy="4.5">Bd Joffre</text><text x="661.6" y="730.7" transform="rotate(-31.8 661.6 730.7)" font-size="13" fill="#3C4043" font-weight="normal" textLength="48.7" lengthAdjust="spacingAndGlyphs" stroke="#F4F3F5" stroke-width="2.5" paint-order="stroke" dy="4.5">Av. Foch</text><text x="640.0" y="811.6" transform="rotate(-19.0 640.0 811.6)" font-size="13" fill="#3C4043" font-weight="normal" textLength="131.9" lengthAdjust="spacingAndGlyphs" stroke="#F4F3F5" stroke-width="2.5" paint-order="stroke" dy="4.5">Rue Gabriel Mouilleron</text><text x="754.0" y="811.6" transform="rotate(64.9 754.0 811.6)" font-size="13" fill="#3C4043" font-weight="normal" textLength="94.7" lengthAdjust="spacingAndGlyphs" stroke="#F4F3F5" stroke-width="2.5" paint-order="stroke" dy="4.5">Bd Jean Jaurès</text><text x="604.0" y="871.8" transform="rotate(61.1 604.0 871.8)" font-size="13" fill="#3C4043" font-weight="normal" textLength="95.1" lengthAdjust="spacingAndGlyphs" stroke="#F4F3F5" stroke-width="2.5" paint-order="stroke" dy="4.5">Sergent Blandan</text><text x="1010.0" y="758.0" transform="rotate(65.8 1010.0 758.0)" font-size="13" fill="#3C4043" font-weight="normal" textLength="42.7" lengthAdjust="spacingAndGlyphs" stroke="#F4F3F5" stroke-width="2.5" paint-order="stroke" dy="4.5">Lobau</text><text x="933.7" y="905.3" transform="rotate(52.9 933.7 905.3)" font-size="13" fill="#3C4043" font-weight="normal" textLength="68.5" lengthAdjust="spacingAndGlyphs" stroke="#F4F3F5" stroke-width="2.5" paint-order="stroke" dy="4.5">Quai de la</text><text x="838.0" y="655.0" transform="rotate(68.2 838.0 655.0)" font-size="13" fill="#3C4043" font-weight="normal" textLength="91.5" lengthAdjust="spacingAndGlyphs" stroke="#F4F3F5" stroke-width="2.5" paint-order="stroke" dy="4.5">Rue Saint-Dizier</text><text x="442.7" y="516.0" font-size="12.5" fill="#2E3135" font-weight="bold" textLength="108.3" lengthAdjust="spacing" stroke="#F4F3F5" stroke-width="2.5" paint-order="stroke">BOUDONVILLE</text><text x="450.0" y="530.0" font-size="12.5" fill="#2E3135" font-weight="bold" textLength="94.4" lengthAdjust="spacing" stroke="#F4F3F5" stroke-width="2.5" paint-order="stroke">- SCARPONE</text><text x="444.7" y="544.7" font-size="12.5" fill="#2E3135" font-weight="bold" textLength="103.8" lengthAdjust="spacing" stroke="#F4F3F5" stroke-width="2.5" paint-order="stroke">- LIBÉRATION</text><text x="972.6" y="556.7" font-size="12.5" fill="#2E3135" font-weight="bold" textLength="69.4" lengthAdjust="spacing" stroke="#F4F3F5" stroke-width="2.5" paint-order="stroke">RIVES DE</text><text x="970.6" y="571.5" font-size="12.5" fill="#2E3135" font-weight="bold" textLength="73.4" lengthAdjust="spacing" stroke="#F4F3F5" stroke-width="2.5" paint-order="stroke">MEURTHE</text><text x="797.0" y="598.8" font-size="12.5" fill="#2E3135" font-weight="bold" textLength="121.3" lengthAdjust="spacing" stroke="#F4F3F5" stroke-width="2.5" paint-order="stroke">UNITÉ URBAINE</text><text x="817.0" y="612.9" font-size="12.5" fill="#2E3135" font-weight="bold" textLength="79.0" lengthAdjust="spacing" stroke="#F4F3F5" stroke-width="2.5" paint-order="stroke">DE NANCY</text><text x="620.0" y="830.3" font-size="12.5" fill="#2E3135" font-weight="bold" textLength="118.0" lengthAdjust="spacing" stroke="#F4F3F5" stroke-width="2.5" paint-order="stroke">HAUSSONVILLE</text><text x="649.6" y="845.0" font-size="12.5" fill="#2E3135" font-weight="bold" textLength="72.3" lengthAdjust="spacing" stroke="#F4F3F5" stroke-width="2.5" paint-order="stroke">- BLANDAN</text><text x="648.0" y="859.8" font-size="12.5" fill="#2E3135" font-weight="bold" textLength="63.0" lengthAdjust="spacing" stroke="#F4F3F5" stroke-width="2.5" paint-order="stroke">- DONOP</text><text x="762.7" y="914.0" font-size="12.5" fill="#2E3135" font-weight="bold" textLength="71.0" lengthAdjust="spacing" stroke="#F4F3F5" stroke-width="2.5" paint-order="stroke">SAURUPT</text><text x="1004.7" y="884.0" font-size="12.5" fill="#2E3135" font-weight="bold" textLength="15.3" lengthAdjust="spacing" stroke="#F4F3F5" stroke-width="2.5" paint-order="stroke">S</text><text x="1004.7" y="912.0" font-size="12.5" fill="#2E3135" font-weight="bold" textLength="15.3" lengthAdjust="spacing" stroke="#F4F3F5" stroke-width="2.5" paint-order="stroke">M</text><text x="1063.0" y="884.0" font-size="12.5" fill="#2E3135" font-weight="bold" textLength="13.0" lengthAdjust="spacing" stroke="#F4F3F5" stroke-width="2.5" paint-order="stroke">PI</text><text x="822" y="642" font-size="24" font-weight="bold" fill="#2a2a2a" stroke="#F4F3F5" stroke-width="2.5" paint-order="stroke">Nancy</text><text x="390.5" y="802.2" font-size="18.5" font-weight="bold" fill="#2f3033" stroke="#F4F3F5" stroke-width="2.5" paint-order="stroke" textLength="49.5" lengthAdjust="spacingAndGlyphs">Laxou</text><path d="M723.2 485.8 L739.3 580.0 L760.7 626.0 L790.0 677.0 L794.0 696.0 L787.5 698.6" fill="none" stroke="#8C9EEF" stroke-width="3" stroke-linejoin="round" stroke-linecap="round" /><path d="M716.5 498.5 L728.6 498.5 L731.0 510.5 L718.5 510.5 L716.5 498.5" fill="none" stroke="#8C9EEF" stroke-width="2.5" stroke-linejoin="round" stroke-linecap="round" /><path d="M656.0 686.5 L734.0 646.3 L814.0 612.9" fill="none" stroke="#63B874" stroke-width="3" stroke-linejoin="round" stroke-linecap="round" /><path d="M775.0 680.0 L805.0 744.0 L811.6 760.0 L827.7 791.5 L840.0 802.2 L861.4 823.6 L865.0 815.0" fill="none" stroke="#63B874" stroke-width="3" stroke-linejoin="round" stroke-linecap="round" /><path d="M792.8 749.5 L805.0 745.4" fill="none" stroke="#63B874" stroke-width="3" stroke-linejoin="round" stroke-linecap="round" /><path d="M795.5 745.0 L798.0 758.0 L802.0 772.7 L791.5 783.4 L680.4 818.3" fill="none" stroke="#63B874" stroke-width="3" stroke-linejoin="round" stroke-linecap="round" /><path d="M837.0 861.0 L852.0 837.0 L897.6 778.0" fill="none" stroke="#63B874" stroke-width="3" stroke-linejoin="round" stroke-linecap="round" /><path d="M833.0 650.0 L840.0 666.4 L880.0 754.8 L883.0 772.0" fill="none" stroke="#63B874" stroke-width="3" stroke-linejoin="round" stroke-linecap="round" /><path d="M588.7 566.0 L594.6 606.7 L620.5 618.6 L632.0 625.6 L661.6 637.6 L684.4 671.8 L728.6 653.0" fill="none" stroke="#5B2BC9" stroke-width="3.2" stroke-linejoin="round" stroke-linecap="round" /><path d="M632.0 625.6 L675.0 744.0 L681.7 758.0 L696.4 788.8 L606.7 817.0 L600.0 827.6 L588.6 842.4 L563.0 870.5 L527.0 914.7 L509.6 926.7" fill="none" stroke="#5B2BC9" stroke-width="3.2" stroke-linejoin="round" stroke-linecap="round" /><path d="M553.8 847.7 L588.6 841.0" fill="none" stroke="#5B2BC9" stroke-width="3.2" stroke-linejoin="round" stroke-linecap="round" /><path d="M553.8 847.7 L561.8 869.0" fill="none" stroke="#5B2BC9" stroke-width="3.2" stroke-linejoin="round" stroke-linecap="round" /><path d="M742.0 681.0 L747.3 685.2 L704.5 706.6 L703.0 716.0 L688.4 736.7 L660.0 750.8 L661.6 758.0 L680.4 830.3 L649.6 841.0 L630.8 863.8 L606.7 870.5" fill="none" stroke="#5B2BC9" stroke-width="3.2" stroke-linejoin="round" stroke-linecap="round" /><path d="M723.2 488.1 C720.2 483.3 709.4 475.3 709.4 466.3 A13.8 13.8 0 0 1 737.0 466.3 C737.0 475.3 726.2 483.3 723.2 488.1 Z" fill="#8C9EEF" stroke="#1A1A2A" stroke-width="1.4"/><text x="723.2" y="475.8" font-size="16.5" fill="#fff" text-anchor="middle" font-weight="bold">10</text><path d="M722.5 467.8 C719.5 463.0 708.7 455.0 708.7 446.0 A13.8 13.8 0 0 1 736.3 446.0 C736.3 455.0 725.5 463.0 722.5 467.8 Z" fill="#8C9EEF" stroke="#1A1A2A" stroke-width="1.4"/><text x="722.5" y="455.5" font-size="16.5" fill="#fff" text-anchor="middle" font-weight="bold">11</text><path d="M718.5 444.6 C715.5 439.8 704.7 431.8 704.7 422.8 A13.8 13.8 0 0 1 732.3 422.8 C732.3 431.8 721.5 439.8 718.5 444.6 Z" fill="#8C9EEF" stroke="#1A1A2A" stroke-width="1.4"/><text x="718.5" y="432.3" font-size="16.5" fill="#fff" text-anchor="middle" font-weight="bold">12</text><path d="M722.5 549.1 C719.5 544.3 708.7 536.3 708.7 527.3 A13.8 13.8 0 0 1 736.3 527.3 C736.3 536.3 725.5 544.3 722.5 549.1 Z" fill="#8C9EEF" stroke="#1A1A2A" stroke-width="1.4"/><text x="722.5" y="536.8" font-size="16.5" fill="#fff" text-anchor="middle" font-weight="bold">13</text><path d="M782.0 610.8 C779.0 606.0 768.2 598.0 768.2 589.0 A13.8 13.8 0 0 1 795.8 589.0 C795.8 598.0 785.0 606.0 782.0 610.8 Z" fill="#8C9EEF" stroke="#1A1A2A" stroke-width="1.4"/><path d="M780.3 607.4 C777.3 602.6 766.5 594.6 766.5 585.6 A13.8 13.8 0 0 1 794.1 585.6 C794.1 594.6 783.3 602.6 780.3 607.4 Z" fill="#8C9EEF" stroke="#1A1A2A" stroke-width="1.4"/><path d="M775.9 597.2 C772.9 592.4 762.1 584.4 762.1 575.4 A13.8 13.8 0 0 1 789.7 575.4 C789.7 584.4 778.9 592.4 775.9 597.2 Z" fill="#8C9EEF" stroke="#1A1A2A" stroke-width="1.4"/><text x="775.9" y="584.9" font-size="16.5" fill="#fff" text-anchor="middle" font-weight="bold">7</text><path d="M765.3 575.2 C762.3 570.4 751.5 562.4 751.5 553.4 A13.8 13.8 0 0 1 779.1 553.4 C779.1 562.4 768.3 570.4 765.3 575.2 Z" fill="#8C9EEF" stroke="#1A1A2A" stroke-width="1.4"/><path d="M762.3 568.5 C759.3 563.7 748.5 555.7 748.5 546.7 A13.8 13.8 0 0 1 776.1 546.7 C776.1 555.7 765.3 563.7 762.3 568.5 Z" fill="#8C9EEF" stroke="#1A1A2A" stroke-width="1.4"/><text x="762.3" y="556.2" font-size="16.5" fill="#fff" text-anchor="middle" font-weight="bold">9</text><path d="M817.8 606.8 C814.8 602.0 804.0 594.0 804.0 585.0 A13.8 13.8 0 0 1 831.6 585.0 C831.6 594.0 820.8 602.0 817.8 606.8 Z" fill="#5DB86A" stroke="#1A1A2A" stroke-width="1.4"/><path d="M819.3 605.0 C816.3 600.2 805.5 592.2 805.5 583.2 A13.8 13.8 0 0 1 833.1 583.2 C833.1 592.2 822.3 600.2 819.3 605.0 Z" fill="#5DB86A" stroke="#1A1A2A" stroke-width="1.4"/><text x="819.3" y="592.7" font-size="16.5" fill="#fff" text-anchor="middle" font-weight="bold">1</text><path d="M828.9 601.5 C825.9 596.7 815.1 588.7 815.1 579.7 A13.8 13.8 0 0 1 842.7 579.7 C842.7 588.7 831.9 596.7 828.9 601.5 Z" fill="#5DB86A" stroke="#1A1A2A" stroke-width="1.4"/><text x="828.9" y="589.2" font-size="16.5" fill="#fff" text-anchor="middle" font-weight="bold">17</text><path d="M785.5 679.8 C782.5 675.0 771.7 667.0 771.7 658.0 A13.8 13.8 0 0 1 799.3 658.0 C799.3 667.0 788.5 675.0 785.5 679.8 Z" fill="#8C9EEF" stroke="#1A1A2A" stroke-width="1.4"/><path d="M792.7 679.8 C789.7 675.0 778.9 667.0 778.9 658.0 A13.8 13.8 0 0 1 806.5 658.0 C806.5 667.0 795.7 675.0 792.7 679.8 Z" fill="#8C9EEF" stroke="#1A1A2A" stroke-width="1.4"/><path d="M792.0 672.8 C789.0 668.0 778.2 660.0 778.2 651.0 A13.8 13.8 0 0 1 805.8 651.0 C805.8 660.0 795.0 668.0 792.0 672.8 Z" fill="#8C9EEF" stroke="#1A1A2A" stroke-width="1.4"/><text x="792.0" y="660.5" font-size="16.5" fill="#fff" text-anchor="middle" font-weight="bold">3</text><path d="M806.4 664.9 C803.4 660.1 792.6 652.1 792.6 643.1 A13.8 13.8 0 0 1 820.2 643.1 C820.2 652.1 809.4 660.1 806.4 664.9 Z" fill="#8C9EEF" stroke="#1A1A2A" stroke-width="1.4"/><text x="806.4" y="652.6" font-size="16.5" fill="#fff" text-anchor="middle" font-weight="bold">4</text><path d="M820.7 663.2 C817.7 658.4 806.9 650.4 806.9 641.4 A13.8 13.8 0 0 1 834.5 641.4 C834.5 650.4 823.7 658.4 820.7 663.2 Z" fill="#5DB86A" stroke="#1A1A2A" stroke-width="1.4"/><path d="M823.0 660.8 C820.0 656.0 809.2 648.0 809.2 639.0 A13.8 13.8 0 0 1 836.8 639.0 C836.8 648.0 826.0 656.0 823.0 660.8 Z" fill="#5DB86A" stroke="#1A1A2A" stroke-width="1.4"/><path d="M826.7 656.5 C823.7 651.7 812.9 643.7 812.9 634.7 A13.8 13.8 0 0 1 840.5 634.7 C840.5 643.7 829.7 651.7 826.7 656.5 Z" fill="#5DB86A" stroke="#1A1A2A" stroke-width="1.4"/><text x="826.7" y="644.2" font-size="16.5" fill="#fff" text-anchor="middle" font-weight="bold">1</text><path d="M839.5 655.2 C836.5 650.4 825.7 642.4 825.7 633.4 A13.8 13.8 0 0 1 853.3 633.4 C853.3 642.4 842.5 650.4 839.5 655.2 Z" fill="#5DB86A" stroke="#1A1A2A" stroke-width="1.4"/><path d="M835.8 649.9 C832.8 645.1 822.0 637.1 822.0 628.1 A13.8 13.8 0 0 1 849.6 628.1 C849.6 637.1 838.8 645.1 835.8 649.9 Z" fill="#5DB86A" stroke="#1A1A2A" stroke-width="1.4"/><text x="835.8" y="637.6" font-size="16.5" fill="#fff" text-anchor="middle" font-weight="bold">13</text><path d="M775.7 679.3 C772.7 674.5 761.9 666.5 761.9 657.5 A13.8 13.8 0 0 1 789.5 657.5 C789.5 666.5 778.7 674.5 775.7 679.3 Z" fill="#5DB86A" stroke="#1A1A2A" stroke-width="1.4"/><text x="775.7" y="667.0" font-size="16.5" fill="#fff" text-anchor="middle" font-weight="bold">2</text><path d="M864.8 815.3 C861.8 810.5 851.0 802.5 851.0 793.5 A13.8 13.8 0 0 1 878.6 793.5 C878.6 802.5 867.8 810.5 864.8 815.3 Z" fill="#5DB86A" stroke="#1A1A2A" stroke-width="1.4"/><text x="864.8" y="803.0" font-size="16.5" fill="#fff" text-anchor="middle" font-weight="bold">5</text><path d="M880.0 802.6 C877.0 797.8 866.2 789.8 866.2 780.8 A13.8 13.8 0 0 1 893.8 780.8 C893.8 789.8 883.0 797.8 880.0 802.6 Z" fill="#5DB86A" stroke="#1A1A2A" stroke-width="1.4"/><path d="M883.5 793.8 C880.5 789.0 869.7 781.0 869.7 772.0 A13.8 13.8 0 0 1 897.3 772.0 C897.3 781.0 886.5 789.0 883.5 793.8 Z" fill="#5DB86A" stroke="#1A1A2A" stroke-width="1.4"/><text x="883.5" y="781.5" font-size="16.5" fill="#fff" text-anchor="middle" font-weight="bold">8</text><path d="M836.0 862.8 C833.0 858.0 822.2 850.0 822.2 841.0 A13.8 13.8 0 0 1 849.8 841.0 C849.8 850.0 839.0 858.0 836.0 862.8 Z" fill="#5DB86A" stroke="#1A1A2A" stroke-width="1.4"/><text x="836.0" y="850.5" font-size="16.5" fill="#fff" text-anchor="middle" font-weight="bold">3</text><path d="M588.7 566.6 C585.7 561.8 574.9 553.8 574.9 544.8 A13.8 13.8 0 0 1 602.5 544.8 C602.5 553.8 591.7 561.8 588.7 566.6 Z" fill="#5F25D0" stroke="#1A1A2A" stroke-width="1.4"/><text x="588.7" y="554.3" font-size="16.5" fill="#fff" text-anchor="middle" font-weight="bold">5</text><path d="M621.0 614.8 C618.0 610.0 607.2 602.0 607.2 593.0 A13.8 13.8 0 0 1 634.8 593.0 C634.8 602.0 624.0 610.0 621.0 614.8 Z" fill="#5F25D0" stroke="#1A1A2A" stroke-width="1.4"/><text x="621.0" y="602.5" font-size="16.5" fill="#fff" text-anchor="middle" font-weight="bold">3</text><path d="M741.8 682.6 C738.8 677.8 728.0 669.8 728.0 660.8 A13.8 13.8 0 0 1 755.6 660.8 C755.6 669.8 744.8 677.8 741.8 682.6 Z" fill="#5F25D0" stroke="#1A1A2A" stroke-width="1.4"/><text x="741.8" y="670.3" font-size="16.5" fill="#fff" text-anchor="middle" font-weight="bold">2</text><path d="M498.0 924.3 C495.0 919.5 484.2 911.5 484.2 902.5 A13.8 13.8 0 0 1 511.8 902.5 C511.8 911.5 501.0 919.5 498.0 924.3 Z" fill="#5F25D0" stroke="#1A1A2A" stroke-width="1.4"/><path d="M501.0 934.3 C498.0 929.5 487.2 921.5 487.2 912.5 A13.8 13.8 0 0 1 514.8 912.5 C514.8 921.5 504.0 929.5 501.0 934.3 Z" fill="#5F25D0" stroke="#1A1A2A" stroke-width="1.4"/><text x="501.0" y="922.0" font-size="16.5" fill="#fff" text-anchor="middle" font-weight="bold">8</text><path d="M640.0 860.2 C637.0 855.4 626.2 847.4 626.2 838.4 A13.8 13.8 0 0 1 653.8 838.4 C653.8 847.4 643.0 855.4 640.0 860.2 Z" fill="#5F25D0" stroke="#1A1A2A" stroke-width="1.4"/><text x="640.0" y="847.9" font-size="16.5" fill="#fff" text-anchor="middle" font-weight="bold">3</text><path d="M606.7 868.2 C603.7 863.4 592.9 855.4 592.9 846.4 A13.8 13.8 0 0 1 620.5 846.4 C620.5 855.4 609.7 863.4 606.7 868.2 Z" fill="#5F25D0" stroke="#1A1A2A" stroke-width="1.4"/><text x="606.7" y="855.9" font-size="16.5" fill="#fff" text-anchor="middle" font-weight="bold">1</text><path d="M622.8 865.5 C619.8 860.7 609.0 852.7 609.0 843.7 A13.8 13.8 0 0 1 636.6 843.7 C636.6 852.7 625.8 860.7 622.8 865.5 Z" fill="#4066D6" stroke="#1A1A2A" stroke-width="1.4"/><path d="M622.8 854 C619 848.5 617.3 845.5 617.3 843 A5.5 5.5 0 0 1 628.3 843 C628.3 845.5 626.6 848.5 622.8 854 Z" fill="#fff"/><circle cx="622.8" cy="843" r="2" fill="#4066D6"/><rect x="712.5" y="668.5" width="16" height="16" rx="4" fill="#5F6B77" stroke="#fff" stroke-width="1.2"/><rect x="716.5" y="672" width="8" height="8" rx="1.5" fill="none" stroke="#fff" stroke-width="1.2"/><path d="M716.5 676 H724.5" stroke="#fff" stroke-width="1"/><rect x="1014.8" y="818.3" width="48.2" height="95.7" fill="#fff" filter="url(#sh)"/><path d="M1029.5 841.7 H1048.5 M1039 832.2 V851.2" stroke="#555" stroke-width="2.6"/><path d="M1029.5 890.6 H1048.5" stroke="#555" stroke-width="2.6"/><path d="M1020 866.5 H1058" stroke="#E6E6E6" stroke-width="1"/><rect x="1036.4" y="391" width="38.3" height="59.6" rx="2" fill="#2E67B1"/><path d="M1051.5 410 L1062.5 421 L1051.5 432 Z" fill="none" stroke="#fff" stroke-width="2"/></g></svg>
<div class="a" style="left:95px;top:985.5px;width:1755px;height:367px;background:#F9F9FA;border-radius:21px;box-shadow:0 2px 6px rgba(40,30,80,0.05),0 4px 32px rgba(50,40,110,0.13);"></div>
<div class="a" style="left:115.5px;top:1007.5px;width:1713.5px;height:321.5px;background:#fff;"></div>
<div class="a" style="left:676px;top:1306px;width:1152.5px;height:23px;background:#F7F7F7;"></div>
<div class="a" style="left:675.5px;top:1094.5px;width:1px;height:211.5px;background:#EDEDED;"></div>
<div class="a" style="left:732.2px;top:1094.5px;width:1px;height:211.5px;background:#EDEDED;"></div>
<div class="a" style="left:788.9px;top:1094.5px;width:1px;height:211.5px;background:#EDEDED;"></div>
<div class="a" style="left:845.6px;top:1094.5px;width:1px;height:211.5px;background:#EDEDED;"></div>
<div class="a" style="left:902.3px;top:1094.5px;width:1px;height:211.5px;background:#EDEDED;"></div>
<div class="a" style="left:959.0px;top:1094.5px;width:1px;height:211.5px;background:#EDEDED;"></div>
<div class="a" style="left:1015.7px;top:1094.5px;width:1px;height:211.5px;background:#EDEDED;"></div>
<div class="a" style="left:1072.4px;top:1094.5px;width:1px;height:211.5px;background:#EDEDED;"></div>
<div class="a" style="left:1129.1px;top:1094.5px;width:1px;height:211.5px;background:#EDEDED;"></div>
<div class="a" style="left:1185.8px;top:1094.5px;width:1px;height:211.5px;background:#EDEDED;"></div>
<div class="a" style="left:1242.5px;top:1094.5px;width:1px;height:211.5px;background:#EDEDED;"></div>
<div class="a" style="left:1299.2px;top:1094.5px;width:1px;height:211.5px;background:#EDEDED;"></div>
<div class="a" style="left:1355.9px;top:1094.5px;width:1px;height:211.5px;background:#EDEDED;"></div>
<div class="a" style="left:1412.6px;top:1094.5px;width:1px;height:211.5px;background:#EDEDED;"></div>
<div class="a" style="left:1469.3px;top:1094.5px;width:1px;height:211.5px;background:#EDEDED;"></div>
<div class="a" style="left:1526.0px;top:1094.5px;width:1px;height:211.5px;background:#EDEDED;"></div>
<div class="a" style="left:1582.7px;top:1094.5px;width:1px;height:211.5px;background:#EDEDED;"></div>
<div class="a" style="left:1639.4px;top:1094.5px;width:1px;height:211.5px;background:#EDEDED;"></div>
<div class="a" style="left:1696.1px;top:1094.5px;width:1px;height:211.5px;background:#EDEDED;"></div>
<div class="a" style="left:1752.8px;top:1094.5px;width:1px;height:211.5px;background:#EDEDED;"></div>
<div class="a" style="left:1809.5px;top:1094.5px;width:1px;height:211.5px;background:#EDEDED;"></div>
<div class="a" style="left:1696px;top:1095px;width:131px;height:63.40000000000009px;background:repeating-linear-gradient(45deg,#E3E3E3 0px,#E3E3E3 7px,#fff 7px,#fff 14px);"></div>
<div class="a" style="left:1696px;top:1165.5px;width:131px;height:63.5px;background:repeating-linear-gradient(45deg,#E3E3E3 0px,#E3E3E3 7px,#fff 7px,#fff 14px);"></div>
<div class="a" style="left:1696px;top:1236.5px;width:131px;height:63.0px;background:repeating-linear-gradient(45deg,#E3E3E3 0px,#E3E3E3 7px,#fff 7px,#fff 14px);"></div>
<div class="t " style="left:1200.5px;top:1021.5px;font-size:19px;line-height:19px;color:#222;transform:scaleX(1.0622);transform-origin:0 0;">29/04/2025</div>
<div class="a" style="left:676px;top:1050px;width:1152.5px;height:1px;background:#CFCFCF;"></div>
<div class="t " style="left:706.2px;top:1064.3px;font-size:19px;line-height:19px;color:#222;transform:scaleX(1.0938);transform-origin:0 0;">08:00</div>
<div class="a" style="left:788.9px;top:1050px;width:1px;height:44.5px;background:#CFCFCF;"></div>
<div class="t " style="left:819.6px;top:1064.3px;font-size:19px;line-height:19px;color:#222;transform:scaleX(1.0938);transform-origin:0 0;">09:00</div>
<div class="a" style="left:902.3px;top:1050px;width:1px;height:44.5px;background:#CFCFCF;"></div>
<div class="t " style="left:933.0px;top:1064.3px;font-size:19px;line-height:19px;color:#222;transform:scaleX(1.0938);transform-origin:0 0;">10:00</div>
<div class="a" style="left:1015.7px;top:1050px;width:1px;height:44.5px;background:#CFCFCF;"></div>
<div class="t " style="left:1046.4px;top:1064.3px;font-size:19px;line-height:19px;color:#222;transform:scaleX(1.1272);transform-origin:0 0;">11:00</div>
<div class="a" style="left:1129.1px;top:1050px;width:1px;height:44.5px;background:#CFCFCF;"></div>
<div class="t " style="left:1159.8px;top:1064.3px;font-size:19px;line-height:19px;color:#222;transform:scaleX(1.0938);transform-origin:0 0;">12:00</div>
<div class="a" style="left:1242.5px;top:1050px;width:1px;height:44.5px;background:#CFCFCF;"></div>
<div class="t " style="left:1273.2px;top:1064.3px;font-size:19px;line-height:19px;color:#222;transform:scaleX(1.0938);transform-origin:0 0;">13:00</div>
<div class="a" style="left:1355.9px;top:1050px;width:1px;height:44.5px;background:#CFCFCF;"></div>
<div class="t " style="left:1386.6px;top:1064.3px;font-size:19px;line-height:19px;color:#222;transform:scaleX(1.0938);transform-origin:0 0;">14:00</div>
<div class="a" style="left:1469.3px;top:1050px;width:1px;height:44.5px;background:#CFCFCF;"></div>
<div class="t " style="left:1500.0px;top:1064.3px;font-size:19px;line-height:19px;color:#222;transform:scaleX(1.0938);transform-origin:0 0;">15:00</div>
<div class="a" style="left:1582.7px;top:1050px;width:1px;height:44.5px;background:#CFCFCF;"></div>
<div class="t " style="left:1613.4px;top:1064.3px;font-size:19px;line-height:19px;color:#222;transform:scaleX(1.0938);transform-origin:0 0;">16:00</div>
<div class="a" style="left:1696.1px;top:1050px;width:1px;height:44.5px;background:#CFCFCF;"></div>
<div class="t " style="left:1726.8px;top:1064.3px;font-size:19px;line-height:19px;color:#222;transform:scaleX(1.0938);transform-origin:0 0;">17:00</div>
<div class="a" style="left:1809.4px;top:1050px;width:1px;height:44.5px;background:#CFCFCF;"></div>
<div class="a" style="left:1810.4px;top:1050px;width:18px;height:44px;overflow:hidden;"><div class="t " style="left:-21.0px;top:14.3px;font-size:19px;line-height:19px;color:#222;transform:scaleX(1.0938);transform-origin:0 0;">18:00</div></div>
<div class="a" style="left:115px;top:1007px;width:1714px;height:322px;box-sizing:border-box;border:1px solid #BDBDBD;"></div>
<div class="a" style="left:675px;top:1007px;width:1px;height:322px;background:#BDBDBD;"></div>
<div class="a" style="left:116px;top:1094px;width:560px;height:1px;background:#BDBDBD;"></div>
<div class="a" style="left:116px;top:1165px;width:560px;height:1px;background:#BDBDBD;"></div>
<div class="a" style="left:116px;top:1235px;width:560px;height:1px;background:#BDBDBD;"></div>
<div class="a" style="left:116px;top:1306px;width:560px;height:1px;background:#BDBDBD;"></div>
<div class="a" style="left:676px;top:1094px;width:1152px;height:1px;background:#BDBDBD;"></div>
<div class="a" style="left:676px;top:1165px;width:1152px;height:1px;background:#E6E6E6;"></div>
<div class="a" style="left:676px;top:1235px;width:1152px;height:1px;background:#E6E6E6;"></div>
<div class="a" style="left:676px;top:1306px;width:1152px;height:1px;background:#E6E6E6;"></div>
<div class="a" style="left:128px;top:1036px;width:22px;height:22px;box-sizing:border-box;border:1.5px solid #555;border-radius:3px;background:#fff;"></div>
<div class="a" style="left:128px;top:1118.5px;width:22px;height:22px;box-sizing:border-box;border:1.5px solid #555;border-radius:3px;background:#fff;"></div>
<div class="a" style="left:194px;top:1115.0px;width:29px;height:29px;box-sizing:border-box;background:#5DB86A;border:2px solid #111;border-radius:50%;"></div>
<div class="t " style="left:232.5px;top:1119.9px;font-size:19px;line-height:19px;color:#262626;transform:scaleX(1.1067);transform-origin:0 0;">Julia Virmond</div>
<div class="a" style="left:456px;top:1117.0px;width:117px;height:25.5px;background:#FDF7E6;border-radius:3px;"></div>
<div class="t " style="left:465.0px;top:1122.7px;font-size:14.5px;line-height:14.5px;color:#F0BE4B;font-weight:bold;transform:scaleX(0.9801);transform-origin:0 0;">NOT STARTED</div>
<div class="a" style="left:636px;top:1131.0px;width:5px;height:5px;background:#1a1a1a;border-radius:50%;"></div>
<div class="a" style="left:648px;top:1131.0px;width:5px;height:5px;background:#1a1a1a;border-radius:50%;"></div>
<div class="a" style="left:660px;top:1131.0px;width:5px;height:5px;background:#1a1a1a;border-radius:50%;"></div>
<div class="a" style="left:128px;top:1189.5px;width:22px;height:22px;box-sizing:border-box;border:1.5px solid #555;border-radius:3px;background:#fff;"></div>
<div class="a" style="left:194px;top:1186.0px;width:29px;height:29px;box-sizing:border-box;background:#8EA2F2;border:2px solid #111;border-radius:50%;"></div>
<div class="t " style="left:232.5px;top:1190.9px;font-size:19px;line-height:19px;color:#262626;transform:scaleX(1.0905);transform-origin:0 0;">Paul Wagner</div>
<div class="a" style="left:456px;top:1188.0px;width:117px;height:25.5px;background:#FDF7E6;border-radius:3px;"></div>
<div class="t " style="left:465.0px;top:1193.7px;font-size:14.5px;line-height:14.5px;color:#F0BE4B;font-weight:bold;transform:scaleX(0.9801);transform-origin:0 0;">NOT STARTED</div>
<div class="a" style="left:636px;top:1202.0px;width:5px;height:5px;background:#1a1a1a;border-radius:50%;"></div>
<div class="a" style="left:648px;top:1202.0px;width:5px;height:5px;background:#1a1a1a;border-radius:50%;"></div>
<div class="a" style="left:660px;top:1202.0px;width:5px;height:5px;background:#1a1a1a;border-radius:50%;"></div>
<div class="a" style="left:128px;top:1260.5px;width:22px;height:22px;box-sizing:border-box;border:1.5px solid #555;border-radius:3px;background:#fff;"></div>
<div class="a" style="left:194px;top:1257.0px;width:29px;height:29px;box-sizing:border-box;background:#5B22C9;border:2px solid #111;border-radius:50%;"></div>
<div class="t " style="left:232.5px;top:1261.9px;font-size:19px;line-height:19px;color:#262626;transform:scaleX(1.0578);transform-origin:0 0;">Pierre Patel</div>
<div class="a" style="left:456px;top:1259.0px;width:117px;height:25.5px;background:#FDF7E6;border-radius:3px;"></div>
<div class="t " style="left:465.0px;top:1264.7px;font-size:14.5px;line-height:14.5px;color:#F0BE4B;font-weight:bold;transform:scaleX(0.9801);transform-origin:0 0;">NOT STARTED</div>
<div class="a" style="left:636px;top:1273.0px;width:5px;height:5px;background:#1a1a1a;border-radius:50%;"></div>
<div class="a" style="left:648px;top:1273.0px;width:5px;height:5px;background:#1a1a1a;border-radius:50%;"></div>
<div class="a" style="left:660px;top:1273.0px;width:5px;height:5px;background:#1a1a1a;border-radius:50%;"></div>
<div class="a" style="left:434px;top:1057px;width:28px;height:28px;background:#EFEFEF;border-radius:50%;"></div>
<div class="a" style="left:442px;top:1070.3px;width:12px;height:1.5px;background:#9a9a9a;"></div>
<div class="a" style="left:590px;top:1057px;width:28px;height:28px;background:#EFEFEF;border-radius:50%;"></div>
<div class="a" style="left:597.5px;top:1070.3px;width:12px;height:1.5px;background:#9a9a9a;"></div>
<div class="a" style="left:602.8px;top:1064.5px;width:1.5px;height:13px;background:#9a9a9a;"></div>
<div class="a" style="left:471px;top:1068.5px;width:111px;height:5px;box-sizing:border-box;background:#fff;border:1.5px solid #C9C9C9;border-radius:3px;"></div>
<div class="a" style="left:472px;top:1069px;width:12px;height:4px;background:#888;"></div>
<div class="a" style="left:472px;top:1059.5px;width:23px;height:23px;background:#8A8A8A;border-radius:50%;"></div>
<div class="t " style="left:625.5px;top:1064.0px;font-size:16px;line-height:16px;color:#777;transform:scaleX(1.0378);transform-origin:0 0;">4%</div>
<div class="a" style="left:676px;top:1125.0px;width:1004px;height:3px;background:#2E67B1;"></div>
<div class="a" style="left:676px;top:1196.0px;width:1016px;height:3px;background:#2E67B1;"></div>
<div class="a" style="left:676px;top:1267.0px;width:1029px;height:3px;background:#2E67B1;"></div>
<div class="a blk" style="left:685.0px;top:1095px;width:66.0px;height:63.299999999999955px;"><span style="left:3px;top:22.9px">GIRAR</span></div>
<div class="a blk" style="left:751.0px;top:1095px;width:67.0px;height:63.299999999999955px;"><span style="left:3px;top:22.9px">FERNA</span></div>
<div class="a blk" style="left:824.0px;top:1095px;width:46.0px;height:63.299999999999955px;"><span style="left:3px;top:22.9px">MAR</span></div>
<div class="a blk" style="left:872.5px;top:1095px;width:47.5px;height:63.299999999999955px;"><span style="left:3px;top:22.9px">Gros</span></div>
<div class="a blk" style="left:921.7px;top:1095px;width:44.8px;height:63.299999999999955px;"><span style="left:3px;top:22.9px">ROB</span></div>
<div class="a blk" style="left:968.7px;top:1095px;width:44.8px;height:63.299999999999955px;"><span style="left:3px;top:22.9px">DUN</span></div>
<div class="a blk" style="left:1015.7px;top:1095px;width:45.3px;height:63.299999999999955px;"><span style="left:3px;top:22.9px">THO</span></div>
<div class="a blk" style="left:1063.0px;top:1095px;width:45.0px;height:63.299999999999955px;"><span style="left:3px;top:22.9px">DUR</span></div>
<div class="a blk" style="left:1113.3px;top:1095px;width:78.2px;height:63.299999999999955px;"><span style="left:3px;top:22.9px">ANGELI</span></div>
<div class="a" style="left:1191.5px;top:1095px;width:34.9px;height:63.299999999999955px;background:#DDE7F2;"></div>
<svg class="a" style="left:1196px;top:1113px;" width="22" height="26" viewBox="0 0 22 26"><path d="M4 10 H15 V19 A4 4 0 0 1 11 23 H8 A4 4 0 0 1 4 19 Z M15 12.5 H16.5 A2.8 2.8 0 0 1 16.5 18 H15" fill="none" stroke="#3E6FAE" stroke-width="1.6" stroke-linejoin="round"/><path d="M8 4.5 V7 M11 4.5 V7" stroke="#3E6FAE" stroke-width="1.6" stroke-dasharray="1.2 1"/></svg>
<div class="a blk" style="left:1226.4px;top:1095px;width:64.3px;height:63.299999999999955px;"><span style="left:3px;top:22.9px">Fourni</span></div>
<div class="a blk" style="left:1290.7px;top:1095px;width:66.9px;height:63.299999999999955px;"><span style="left:3px;top:22.9px">BRICE</span></div>
<div class="a blk" style="left:1357.6px;top:1095px;width:66.4px;height:63.299999999999955px;"><span style="left:3px;top:22.9px">GROSJ</span></div>
<div class="a blk" style="left:1424.0px;top:1095px;width:75.4px;height:63.299999999999955px;"><span style="left:3px;top:22.9px">ADAM G</span></div>
<div class="a blk" style="left:1502.6px;top:1095px;width:36.0px;height:63.299999999999955px;"><span style="left:3px;top:22.9px">WA</span></div>
<div class="a blk" style="left:1538.6px;top:1095px;width:38.8px;height:63.299999999999955px;"><span style="left:3px;top:22.9px">AD</span></div>
<div class="a blk" style="left:1577.4px;top:1095px;width:36.6px;height:63.299999999999955px;"><span style="left:3px;top:22.9px">DU</span></div>
<div class="a blk" style="left:1614.0px;top:1095px;width:38.3px;height:63.299999999999955px;"><span style="left:3px;top:22.9px">PIC</span></div>
<div class="a blk" style="left:685.2px;top:1165.8px;width:75.8px;height:63.0px;"><span style="left:3px;top:22.8px">DUMONT</span></div>
<div class="a blk" style="left:761.0px;top:1165.8px;width:65.0px;height:63.0px;"><span style="left:3px;top:22.8px">WIEMS</span></div>
<div class="a blk" style="left:826.0px;top:1165.8px;width:77.0px;height:63.0px;"><span style="left:3px;top:22.8px">WIEMER</span></div>
<div class="a blk" style="left:903.0px;top:1165.8px;width:74.8px;height:63.0px;"><span style="left:3px;top:22.8px">RICHARD</span></div>
<div class="a blk" style="left:980.8px;top:1165.8px;width:75.8px;height:63.0px;"><span style="left:3px;top:22.8px">ROBERT</span></div>
<div class="a blk" style="left:1056.6px;top:1165.8px;width:78.2px;height:63.0px;"><span style="left:3px;top:22.8px">BRICE E</span></div>
<div class="a" style="left:1134.8px;top:1165.8px;width:53.2px;height:63.0px;background:#DDE7F2;"></div>
<svg class="a" style="left:1139px;top:1184px;" width="22" height="26" viewBox="0 0 22 26"><path d="M4 10 H15 V19 A4 4 0 0 1 11 23 H8 A4 4 0 0 1 4 19 Z M15 12.5 H16.5 A2.8 2.8 0 0 1 16.5 18 H15" fill="none" stroke="#3E6FAE" stroke-width="1.6" stroke-linejoin="round"/><path d="M8 4.5 V7 M11 4.5 V7" stroke="#3E6FAE" stroke-width="1.6" stroke-dasharray="1.2 1"/></svg>
<div class="a blk" style="left:1188.0px;top:1165.8px;width:74.6px;height:63.0px;"><span style="left:3px;top:22.8px">DUPONT</span></div>
<div class="a blk" style="left:1262.6px;top:1165.8px;width:66.4px;height:63.0px;"><span style="left:3px;top:22.8px">MARTIN</span></div>
<div class="a blk" style="left:1329.0px;top:1165.8px;width:67.0px;height:63.0px;"><span style="left:3px;top:22.8px">Rousseau</span></div>
<div class="a blk" style="left:1399.4px;top:1165.8px;width:64.6px;height:63.0px;"><span style="left:3px;top:22.8px">BRUN</span></div>
<div class="a blk" style="left:1464.0px;top:1165.8px;width:65.5px;height:63.0px;"><span style="left:3px;top:22.8px">LAMBERT</span></div>
<div class="a blk" style="left:1529.5px;top:1165.8px;width:66.5px;height:63.0px;"><span style="left:3px;top:22.8px">HENRY</span></div>
<div class="a blk" style="left:1596.0px;top:1165.8px;width:67.8px;height:63.0px;"><span style="left:3px;top:22.8px">WAGNER</span></div>
<div class="a blk" style="left:676.0px;top:1237px;width:64.6px;height:62.5px;"><span style="left:3px;top:22.5px">THOMAS</span></div>
<div class="a blk" style="left:750.4px;top:1237px;width:35.6px;height:62.5px;"><span style="left:3px;top:22.5px">MAR</span></div>
<div class="a blk" style="left:789.5px;top:1237px;width:57.9px;height:62.5px;"><span style="left:3px;top:22.5px">DAVID</span></div>
<div class="a blk" style="left:847.4px;top:1237px;width:58.6px;height:62.5px;"><span style="left:3px;top:22.5px">BRUNO</span></div>
<div class="a blk" style="left:906.0px;top:1237px;width:56.0px;height:62.5px;"><span style="left:3px;top:22.5px">PETIT</span></div>
<div class="a blk" style="left:974.0px;top:1237px;width:47.7px;height:62.5px;"><span style="left:3px;top:22.5px">DUPONT</span></div>
<div class="a blk" style="left:1021.7px;top:1237px;width:47.0px;height:62.5px;"><span style="left:3px;top:22.5px">FERRE</span></div>
<div class="a blk" style="left:1068.7px;top:1237px;width:46.3px;height:62.5px;"><span style="left:3px;top:22.5px">RICHE</span></div>
<div class="a blk" style="left:1121.0px;top:1237px;width:60.8px;height:62.5px;"><span style="left:3px;top:22.5px">ROUX</span></div>
<div class="a" style="left:1181.8px;top:1237px;width:34.2px;height:62.5px;background:#DDE7F2;"></div>
<svg class="a" style="left:1186px;top:1255px;" width="22" height="26" viewBox="0 0 22 26"><path d="M4 10 H15 V19 A4 4 0 0 1 11 23 H8 A4 4 0 0 1 4 19 Z M15 12.5 H16.5 A2.8 2.8 0 0 1 16.5 18 H15" fill="none" stroke="#3E6FAE" stroke-width="1.6" stroke-linejoin="round"/><path d="M8 4.5 V7 M11 4.5 V7" stroke="#3E6FAE" stroke-width="1.6" stroke-dasharray="1.2 1"/></svg>
<div class="a blk" style="left:1216.0px;top:1237px;width:76.0px;height:62.5px;"><span style="left:3px;top:22.5px">PETIT A</span></div>
<div class="a blk" style="left:1292.0px;top:1237px;width:56.0px;height:62.5px;"><span style="left:3px;top:22.5px">MARTIN</span></div>
<div class="a blk" style="left:1348.0px;top:1237px;width:67.0px;height:62.5px;"><span style="left:3px;top:22.5px">SANCHEZ</span></div>
<div class="a blk" style="left:1415.0px;top:1237px;width:76.0px;height:62.5px;"><span style="left:3px;top:22.5px">HENRY</span></div>
<div class="a blk" style="left:1491.0px;top:1237px;width:55.7px;height:62.5px;"><span style="left:3px;top:22.5px">MARTIN</span></div>
<div class="a blk" style="left:1546.7px;top:1237px;width:77.3px;height:62.5px;"><span style="left:3px;top:22.5px">MARTIN</span></div>
<div class="a blk" style="left:1624.0px;top:1237px;width:64.0px;height:62.5px;"><span style="left:3px;top:22.5px">ANGEL</span></div>
<svg class="a" style="left:1661px;top:1109px;" width="36" height="36" viewBox="0 0 36 36"><circle cx="18" cy="18" r="16.6" fill="#2E67B1"/><path d="M8.5 26.5 V15 L18 9.5 L27.5 15 V26.5 Z M12 26.5 V18 H24 V26.5" fill="none" stroke="#fff" stroke-width="1.8" stroke-linejoin="miter"/></svg>
<svg class="a" style="left:1674px;top:1179px;" width="36" height="36" viewBox="0 0 36 36"><circle cx="18" cy="18" r="16.6" fill="#2E67B1"/><path d="M8.5 26.5 V15 L18 9.5 L27.5 15 V26.5 Z M12 26.5 V18 H24 V26.5" fill="none" stroke="#fff" stroke-width="1.8" stroke-linejoin="miter"/></svg>
<svg class="a" style="left:1687px;top:1250px;" width="36" height="36" viewBox="0 0 36 36"><circle cx="18" cy="18" r="16.6" fill="#2E67B1"/><path d="M8.5 26.5 V15 L18 9.5 L27.5 15 V26.5 Z M12 26.5 V18 H24 V26.5" fill="none" stroke="#fff" stroke-width="1.8" stroke-linejoin="miter"/></svg>
<div class="a" style="left:1064px;top:1313.7px;width:478px;height:10.5px;background:#C6C6C6;border-radius:6px;"></div>
</body></html>
